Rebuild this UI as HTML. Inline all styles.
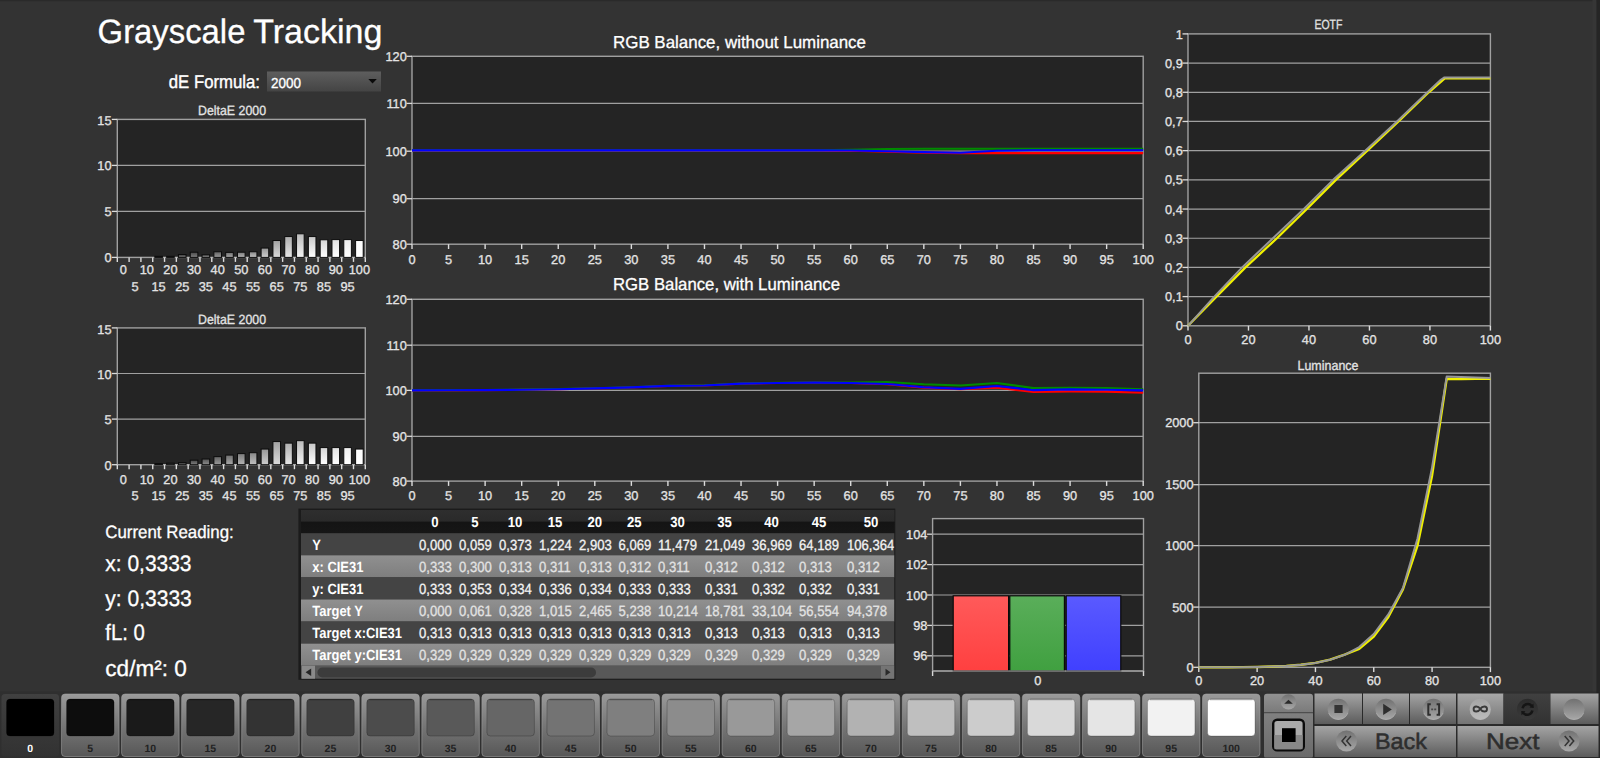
<!DOCTYPE html>
<html><head><meta charset="utf-8"><title>Grayscale Tracking</title>
<style>
html,body{margin:0;padding:0;background:#333333;overflow:hidden}
body{width:1600px;height:758px;font-family:"Liberation Sans",sans-serif}
svg{display:block;font-family:"Liberation Sans",sans-serif}
</style></head><body>
<svg width="1600" height="758" viewBox="0 0 1600 758" text-rendering="geometricPrecision">
<rect x="0.00" y="0.00" width="1600.00" height="758.00" fill="#333333" />
<rect x="0.00" y="0.00" width="1600.00" height="1.20" fill="#2a2a2a" />
<rect x="1592.50" y="0.00" width="4.00" height="758.00" fill="#363636" />
<rect x="1596.50" y="0.00" width="3.50" height="758.00" fill="#252525" />
<text x="97.60" y="42.90" font-size="33.8" text-anchor="start" fill="#ffffff" font-weight="normal" textLength="147.8" lengthAdjust="spacingAndGlyphs"  stroke="#ffffff" stroke-width="0.3">Grayscale</text>
<text x="253.20" y="42.90" font-size="33.8" text-anchor="start" fill="#ffffff" font-weight="normal" textLength="129.2" lengthAdjust="spacingAndGlyphs"  stroke="#ffffff" stroke-width="0.3">Tracking</text>
<text x="168.80" y="87.60" font-size="18.4" text-anchor="start" fill="#ffffff" font-weight="normal" textLength="91.2" lengthAdjust="spacingAndGlyphs" stroke="#ffffff" stroke-width="0.4">dE Formula:</text>
<defs><linearGradient id="dd" x1="0" y1="0" x2="0" y2="1"><stop offset="0" stop-color="#5e5e5e"/><stop offset="1" stop-color="#444444"/></linearGradient><linearGradient id="btn" x1="0" y1="0" x2="0" y2="1"><stop offset="0" stop-color="#9a9a9a"/><stop offset="0.5" stop-color="#777777"/><stop offset="1" stop-color="#575757"/></linearGradient><linearGradient id="btn2" x1="0" y1="0" x2="0" y2="1"><stop offset="0" stop-color="#a4a4a4"/><stop offset="1" stop-color="#5c5c5c"/></linearGradient><linearGradient id="btnd" x1="0" y1="0" x2="0" y2="1"><stop offset="0" stop-color="#404040"/><stop offset="1" stop-color="#323232"/></linearGradient><linearGradient id="circ" x1="0" y1="0" x2="0" y2="1"><stop offset="0" stop-color="#717171"/><stop offset="1" stop-color="#a8a8a8"/></linearGradient><linearGradient id="circl" x1="0" y1="0" x2="0" y2="1"><stop offset="0" stop-color="#a4a4a4"/><stop offset="1" stop-color="#bcbcbc"/></linearGradient><linearGradient id="btnl" x1="0" y1="0" x2="0" y2="1"><stop offset="0" stop-color="#a8a8a8"/><stop offset="1" stop-color="#747474"/></linearGradient><linearGradient id="circd" x1="0" y1="0" x2="0" y2="1"><stop offset="0" stop-color="#2a2a2a"/><stop offset="1" stop-color="#3a3a3a"/></linearGradient><linearGradient id="hdr" x1="0" y1="0" x2="0" y2="1"><stop offset="0" stop-color="#2e2e2e"/><stop offset="0.48" stop-color="#2a2a2a"/><stop offset="0.52" stop-color="#141414"/><stop offset="1" stop-color="#161616"/></linearGradient><linearGradient id="rowl" x1="0" y1="0" x2="0" y2="1"><stop offset="0" stop-color="#909090"/><stop offset="1" stop-color="#7e7e7e"/></linearGradient><linearGradient id="gr" x1="0" y1="0" x2="0" y2="1"><stop offset="0" stop-color="#ff5a5a"/><stop offset="1" stop-color="#ff4040"/></linearGradient><linearGradient id="gg" x1="0" y1="0" x2="0" y2="1"><stop offset="0" stop-color="#5aae5a"/><stop offset="1" stop-color="#40a040"/></linearGradient><linearGradient id="gb" x1="0" y1="0" x2="0" y2="1"><stop offset="0" stop-color="#5a5aff"/><stop offset="1" stop-color="#4040ff"/></linearGradient><linearGradient id="pc1" x1="0" y1="0" x2="0" y2="1"><stop offset="0" stop-color="#929292"/><stop offset="1" stop-color="#767676"/></linearGradient><linearGradient id="pc2" x1="0" y1="0" x2="0" y2="1"><stop offset="0" stop-color="#808080"/><stop offset="1" stop-color="#6a6a6a"/></linearGradient></defs>
<rect x="267.00" y="71.50" width="114.00" height="20.00" fill="url(#dd)" />
<text x="271.00" y="88.20" font-size="14.5" text-anchor="start" fill="#ffffff" font-weight="normal" textLength="30.0" lengthAdjust="spacingAndGlyphs"  stroke="#ffffff" stroke-width="0.3">2000</text>
<path d="M368.3 79 L376.8 79 L372.55 83.6 Z" fill="#0a0a0a"/>
<rect x="117.30" y="119.40" width="248.00" height="138.00" fill="#242424" />
<line x1="117.30" y1="211.40" x2="365.30" y2="211.40" stroke="#a0a0a0" stroke-width="1.2" />
<line x1="117.30" y1="165.40" x2="365.30" y2="165.40" stroke="#a0a0a0" stroke-width="1.2" />
<rect x="117.30" y="119.40" width="248.00" height="138.00" fill="none" stroke="#a0a0a0" stroke-width="1.4"/>
<line x1="111.80" y1="257.40" x2="117.30" y2="257.40" stroke="#dcdcdc" stroke-width="1.3" />
<text x="111.50" y="262.40" font-size="12.8" text-anchor="end" fill="#e4e4e4" font-weight="normal"  stroke="#e4e4e4" stroke-width="0.3">0</text>
<line x1="111.80" y1="211.40" x2="117.30" y2="211.40" stroke="#dcdcdc" stroke-width="1.3" />
<text x="111.50" y="216.40" font-size="12.8" text-anchor="end" fill="#e4e4e4" font-weight="normal"  stroke="#e4e4e4" stroke-width="0.3">5</text>
<line x1="111.80" y1="165.40" x2="117.30" y2="165.40" stroke="#dcdcdc" stroke-width="1.3" />
<text x="111.50" y="170.40" font-size="12.8" text-anchor="end" fill="#e4e4e4" font-weight="normal"  stroke="#e4e4e4" stroke-width="0.3">10</text>
<line x1="111.80" y1="119.40" x2="117.30" y2="119.40" stroke="#dcdcdc" stroke-width="1.3" />
<text x="111.50" y="125.30" font-size="12.8" text-anchor="end" fill="#e4e4e4" font-weight="normal"  stroke="#e4e4e4" stroke-width="0.3">15</text>
<line x1="117.30" y1="257.40" x2="117.30" y2="261.90" stroke="#dcdcdc" stroke-width="1.4" />
<line x1="129.11" y1="257.40" x2="129.11" y2="261.90" stroke="#dcdcdc" stroke-width="1.4" />
<line x1="140.92" y1="257.40" x2="140.92" y2="261.90" stroke="#dcdcdc" stroke-width="1.4" />
<line x1="152.73" y1="257.40" x2="152.73" y2="261.90" stroke="#dcdcdc" stroke-width="1.4" />
<line x1="164.54" y1="257.40" x2="164.54" y2="261.90" stroke="#dcdcdc" stroke-width="1.4" />
<line x1="176.35" y1="257.40" x2="176.35" y2="261.90" stroke="#dcdcdc" stroke-width="1.4" />
<line x1="188.16" y1="257.40" x2="188.16" y2="261.90" stroke="#dcdcdc" stroke-width="1.4" />
<line x1="199.97" y1="257.40" x2="199.97" y2="261.90" stroke="#dcdcdc" stroke-width="1.4" />
<line x1="211.78" y1="257.40" x2="211.78" y2="261.90" stroke="#dcdcdc" stroke-width="1.4" />
<line x1="223.59" y1="257.40" x2="223.59" y2="261.90" stroke="#dcdcdc" stroke-width="1.4" />
<line x1="235.40" y1="257.40" x2="235.40" y2="261.90" stroke="#dcdcdc" stroke-width="1.4" />
<line x1="247.20" y1="257.40" x2="247.20" y2="261.90" stroke="#dcdcdc" stroke-width="1.4" />
<line x1="259.01" y1="257.40" x2="259.01" y2="261.90" stroke="#dcdcdc" stroke-width="1.4" />
<line x1="270.82" y1="257.40" x2="270.82" y2="261.90" stroke="#dcdcdc" stroke-width="1.4" />
<line x1="282.63" y1="257.40" x2="282.63" y2="261.90" stroke="#dcdcdc" stroke-width="1.4" />
<line x1="294.44" y1="257.40" x2="294.44" y2="261.90" stroke="#dcdcdc" stroke-width="1.4" />
<line x1="306.25" y1="257.40" x2="306.25" y2="261.90" stroke="#dcdcdc" stroke-width="1.4" />
<line x1="318.06" y1="257.40" x2="318.06" y2="261.90" stroke="#dcdcdc" stroke-width="1.4" />
<line x1="329.87" y1="257.40" x2="329.87" y2="261.90" stroke="#dcdcdc" stroke-width="1.4" />
<line x1="341.68" y1="257.40" x2="341.68" y2="261.90" stroke="#dcdcdc" stroke-width="1.4" />
<line x1="353.49" y1="257.40" x2="353.49" y2="261.90" stroke="#dcdcdc" stroke-width="1.4" />
<line x1="365.30" y1="257.40" x2="365.30" y2="261.90" stroke="#dcdcdc" stroke-width="1.4" />
<text x="123.20" y="274.20" font-size="12.8" text-anchor="middle" fill="#e4e4e4" font-weight="normal"  stroke="#e4e4e4" stroke-width="0.3">0</text>
<text x="135.01" y="291.30" font-size="12.8" text-anchor="middle" fill="#e4e4e4" font-weight="normal"  stroke="#e4e4e4" stroke-width="0.3">5</text>
<text x="146.82" y="274.20" font-size="12.8" text-anchor="middle" fill="#e4e4e4" font-weight="normal"  stroke="#e4e4e4" stroke-width="0.3">10</text>
<text x="158.63" y="291.30" font-size="12.8" text-anchor="middle" fill="#e4e4e4" font-weight="normal"  stroke="#e4e4e4" stroke-width="0.3">15</text>
<defs><linearGradient id="bg117_119_3" x1="0" y1="0" x2="0" y2="1"><stop offset="0" stop-color="rgb(34,34,34)"/><stop offset="1" stop-color="rgb(90,90,90)"/></linearGradient></defs>
<rect x="154.83" y="256.34" width="7.60" height="1.06" fill="url(#bg117_119_3)" stroke="#0c0c0c" stroke-width="1"/>
<text x="170.44" y="274.20" font-size="12.8" text-anchor="middle" fill="#e4e4e4" font-weight="normal"  stroke="#e4e4e4" stroke-width="0.3">20</text>
<defs><linearGradient id="bg117_119_4" x1="0" y1="0" x2="0" y2="1"><stop offset="0" stop-color="rgb(47,47,47)"/><stop offset="1" stop-color="rgb(103,103,103)"/></linearGradient></defs>
<rect x="166.64" y="256.34" width="7.60" height="1.06" fill="url(#bg117_119_4)" stroke="#0c0c0c" stroke-width="1"/>
<text x="182.25" y="291.30" font-size="12.8" text-anchor="middle" fill="#e4e4e4" font-weight="normal"  stroke="#e4e4e4" stroke-width="0.3">25</text>
<defs><linearGradient id="bg117_119_5" x1="0" y1="0" x2="0" y2="1"><stop offset="0" stop-color="rgb(60,60,60)"/><stop offset="1" stop-color="rgb(116,116,116)"/></linearGradient></defs>
<rect x="178.45" y="254.50" width="7.60" height="2.90" fill="url(#bg117_119_5)" stroke="#0c0c0c" stroke-width="1"/>
<text x="194.06" y="274.20" font-size="12.8" text-anchor="middle" fill="#e4e4e4" font-weight="normal"  stroke="#e4e4e4" stroke-width="0.3">30</text>
<defs><linearGradient id="bg117_119_6" x1="0" y1="0" x2="0" y2="1"><stop offset="0" stop-color="rgb(72,72,72)"/><stop offset="1" stop-color="rgb(128,128,128)"/></linearGradient></defs>
<rect x="190.26" y="252.20" width="7.60" height="5.20" fill="url(#bg117_119_6)" stroke="#0c0c0c" stroke-width="1"/>
<text x="205.87" y="291.30" font-size="12.8" text-anchor="middle" fill="#e4e4e4" font-weight="normal"  stroke="#e4e4e4" stroke-width="0.3">35</text>
<defs><linearGradient id="bg117_119_7" x1="0" y1="0" x2="0" y2="1"><stop offset="0" stop-color="rgb(85,85,85)"/><stop offset="1" stop-color="rgb(141,141,141)"/></linearGradient></defs>
<rect x="202.07" y="254.78" width="7.60" height="2.62" fill="url(#bg117_119_7)" stroke="#0c0c0c" stroke-width="1"/>
<text x="217.68" y="274.20" font-size="12.8" text-anchor="middle" fill="#e4e4e4" font-weight="normal"  stroke="#e4e4e4" stroke-width="0.3">40</text>
<defs><linearGradient id="bg117_119_8" x1="0" y1="0" x2="0" y2="1"><stop offset="0" stop-color="rgb(98,98,98)"/><stop offset="1" stop-color="rgb(154,154,154)"/></linearGradient></defs>
<rect x="213.88" y="251.74" width="7.60" height="5.66" fill="url(#bg117_119_8)" stroke="#0c0c0c" stroke-width="1"/>
<text x="229.49" y="291.30" font-size="12.8" text-anchor="middle" fill="#e4e4e4" font-weight="normal"  stroke="#e4e4e4" stroke-width="0.3">45</text>
<defs><linearGradient id="bg117_119_9" x1="0" y1="0" x2="0" y2="1"><stop offset="0" stop-color="rgb(111,111,111)"/><stop offset="1" stop-color="rgb(167,167,167)"/></linearGradient></defs>
<rect x="225.69" y="252.38" width="7.60" height="5.02" fill="url(#bg117_119_9)" stroke="#0c0c0c" stroke-width="1"/>
<text x="241.30" y="274.20" font-size="12.8" text-anchor="middle" fill="#e4e4e4" font-weight="normal"  stroke="#e4e4e4" stroke-width="0.3">50</text>
<defs><linearGradient id="bg117_119_10" x1="0" y1="0" x2="0" y2="1"><stop offset="0" stop-color="rgb(123,123,123)"/><stop offset="1" stop-color="rgb(179,179,179)"/></linearGradient></defs>
<rect x="237.50" y="252.20" width="7.60" height="5.20" fill="url(#bg117_119_10)" stroke="#0c0c0c" stroke-width="1"/>
<text x="253.11" y="291.30" font-size="12.8" text-anchor="middle" fill="#e4e4e4" font-weight="normal"  stroke="#e4e4e4" stroke-width="0.3">55</text>
<defs><linearGradient id="bg117_119_11" x1="0" y1="0" x2="0" y2="1"><stop offset="0" stop-color="rgb(136,136,136)"/><stop offset="1" stop-color="rgb(192,192,192)"/></linearGradient></defs>
<rect x="249.31" y="251.74" width="7.60" height="5.66" fill="url(#bg117_119_11)" stroke="#0c0c0c" stroke-width="1"/>
<text x="264.92" y="274.20" font-size="12.8" text-anchor="middle" fill="#e4e4e4" font-weight="normal"  stroke="#e4e4e4" stroke-width="0.3">60</text>
<defs><linearGradient id="bg117_119_12" x1="0" y1="0" x2="0" y2="1"><stop offset="0" stop-color="rgb(149,149,149)"/><stop offset="1" stop-color="rgb(205,205,205)"/></linearGradient></defs>
<rect x="261.12" y="248.06" width="7.60" height="9.34" fill="url(#bg117_119_12)" stroke="#0c0c0c" stroke-width="1"/>
<text x="276.73" y="291.30" font-size="12.8" text-anchor="middle" fill="#e4e4e4" font-weight="normal"  stroke="#e4e4e4" stroke-width="0.3">65</text>
<defs><linearGradient id="bg117_119_13" x1="0" y1="0" x2="0" y2="1"><stop offset="0" stop-color="rgb(162,162,162)"/><stop offset="1" stop-color="rgb(218,218,218)"/></linearGradient></defs>
<rect x="272.93" y="240.52" width="7.60" height="16.88" fill="url(#bg117_119_13)" stroke="#0c0c0c" stroke-width="1"/>
<text x="288.54" y="274.20" font-size="12.8" text-anchor="middle" fill="#e4e4e4" font-weight="normal"  stroke="#e4e4e4" stroke-width="0.3">70</text>
<defs><linearGradient id="bg117_119_14" x1="0" y1="0" x2="0" y2="1"><stop offset="0" stop-color="rgb(174,174,174)"/><stop offset="1" stop-color="rgb(230,230,230)"/></linearGradient></defs>
<rect x="284.74" y="236.56" width="7.60" height="20.84" fill="url(#bg117_119_14)" stroke="#0c0c0c" stroke-width="1"/>
<text x="300.35" y="291.30" font-size="12.8" text-anchor="middle" fill="#e4e4e4" font-weight="normal"  stroke="#e4e4e4" stroke-width="0.3">75</text>
<defs><linearGradient id="bg117_119_15" x1="0" y1="0" x2="0" y2="1"><stop offset="0" stop-color="rgb(187,187,187)"/><stop offset="1" stop-color="rgb(243,243,243)"/></linearGradient></defs>
<rect x="296.55" y="233.80" width="7.60" height="23.60" fill="url(#bg117_119_15)" stroke="#0c0c0c" stroke-width="1"/>
<text x="312.16" y="274.20" font-size="12.8" text-anchor="middle" fill="#e4e4e4" font-weight="normal"  stroke="#e4e4e4" stroke-width="0.3">80</text>
<defs><linearGradient id="bg117_119_16" x1="0" y1="0" x2="0" y2="1"><stop offset="0" stop-color="rgb(200,200,200)"/><stop offset="1" stop-color="rgb(255,255,255)"/></linearGradient></defs>
<rect x="308.36" y="236.56" width="7.60" height="20.84" fill="url(#bg117_119_16)" stroke="#0c0c0c" stroke-width="1"/>
<text x="323.97" y="291.30" font-size="12.8" text-anchor="middle" fill="#e4e4e4" font-weight="normal"  stroke="#e4e4e4" stroke-width="0.3">85</text>
<defs><linearGradient id="bg117_119_17" x1="0" y1="0" x2="0" y2="1"><stop offset="0" stop-color="rgb(213,213,213)"/><stop offset="1" stop-color="rgb(255,255,255)"/></linearGradient></defs>
<rect x="320.17" y="239.78" width="7.60" height="17.62" fill="url(#bg117_119_17)" stroke="#0c0c0c" stroke-width="1"/>
<text x="335.78" y="274.20" font-size="12.8" text-anchor="middle" fill="#e4e4e4" font-weight="normal"  stroke="#e4e4e4" stroke-width="0.3">90</text>
<defs><linearGradient id="bg117_119_18" x1="0" y1="0" x2="0" y2="1"><stop offset="0" stop-color="rgb(225,225,225)"/><stop offset="1" stop-color="rgb(255,255,255)"/></linearGradient></defs>
<rect x="331.98" y="239.60" width="7.60" height="17.80" fill="url(#bg117_119_18)" stroke="#0c0c0c" stroke-width="1"/>
<text x="347.59" y="291.30" font-size="12.8" text-anchor="middle" fill="#e4e4e4" font-weight="normal"  stroke="#e4e4e4" stroke-width="0.3">95</text>
<defs><linearGradient id="bg117_119_19" x1="0" y1="0" x2="0" y2="1"><stop offset="0" stop-color="rgb(238,238,238)"/><stop offset="1" stop-color="rgb(255,255,255)"/></linearGradient></defs>
<rect x="343.79" y="239.60" width="7.60" height="17.80" fill="url(#bg117_119_19)" stroke="#0c0c0c" stroke-width="1"/>
<text x="359.40" y="274.20" font-size="12.8" text-anchor="middle" fill="#e4e4e4" font-weight="normal"  stroke="#e4e4e4" stroke-width="0.3">100</text>
<defs><linearGradient id="bg117_119_20" x1="0" y1="0" x2="0" y2="1"><stop offset="0" stop-color="rgb(251,251,251)"/><stop offset="1" stop-color="rgb(255,255,255)"/></linearGradient></defs>
<rect x="355.60" y="240.52" width="7.60" height="16.88" fill="url(#bg117_119_20)" stroke="#0c0c0c" stroke-width="1"/>
<text x="232.00" y="114.80" font-size="13.3" text-anchor="middle" fill="#e4e4e4" font-weight="normal" textLength="68.0" lengthAdjust="spacingAndGlyphs"  stroke="#e4e4e4" stroke-width="0.3">DeltaE 2000</text>
<rect x="117.30" y="327.90" width="248.00" height="136.80" fill="#242424" />
<line x1="117.30" y1="419.10" x2="365.30" y2="419.10" stroke="#a0a0a0" stroke-width="1.2" />
<line x1="117.30" y1="373.50" x2="365.30" y2="373.50" stroke="#a0a0a0" stroke-width="1.2" />
<rect x="117.30" y="327.90" width="248.00" height="136.80" fill="none" stroke="#a0a0a0" stroke-width="1.4"/>
<line x1="111.80" y1="464.70" x2="117.30" y2="464.70" stroke="#dcdcdc" stroke-width="1.3" />
<text x="111.50" y="469.70" font-size="12.8" text-anchor="end" fill="#e4e4e4" font-weight="normal"  stroke="#e4e4e4" stroke-width="0.3">0</text>
<line x1="111.80" y1="419.10" x2="117.30" y2="419.10" stroke="#dcdcdc" stroke-width="1.3" />
<text x="111.50" y="424.10" font-size="12.8" text-anchor="end" fill="#e4e4e4" font-weight="normal"  stroke="#e4e4e4" stroke-width="0.3">5</text>
<line x1="111.80" y1="373.50" x2="117.30" y2="373.50" stroke="#dcdcdc" stroke-width="1.3" />
<text x="111.50" y="378.50" font-size="12.8" text-anchor="end" fill="#e4e4e4" font-weight="normal"  stroke="#e4e4e4" stroke-width="0.3">10</text>
<line x1="111.80" y1="327.90" x2="117.30" y2="327.90" stroke="#dcdcdc" stroke-width="1.3" />
<text x="111.50" y="333.80" font-size="12.8" text-anchor="end" fill="#e4e4e4" font-weight="normal"  stroke="#e4e4e4" stroke-width="0.3">15</text>
<line x1="117.30" y1="464.70" x2="117.30" y2="469.20" stroke="#dcdcdc" stroke-width="1.4" />
<line x1="129.11" y1="464.70" x2="129.11" y2="469.20" stroke="#dcdcdc" stroke-width="1.4" />
<line x1="140.92" y1="464.70" x2="140.92" y2="469.20" stroke="#dcdcdc" stroke-width="1.4" />
<line x1="152.73" y1="464.70" x2="152.73" y2="469.20" stroke="#dcdcdc" stroke-width="1.4" />
<line x1="164.54" y1="464.70" x2="164.54" y2="469.20" stroke="#dcdcdc" stroke-width="1.4" />
<line x1="176.35" y1="464.70" x2="176.35" y2="469.20" stroke="#dcdcdc" stroke-width="1.4" />
<line x1="188.16" y1="464.70" x2="188.16" y2="469.20" stroke="#dcdcdc" stroke-width="1.4" />
<line x1="199.97" y1="464.70" x2="199.97" y2="469.20" stroke="#dcdcdc" stroke-width="1.4" />
<line x1="211.78" y1="464.70" x2="211.78" y2="469.20" stroke="#dcdcdc" stroke-width="1.4" />
<line x1="223.59" y1="464.70" x2="223.59" y2="469.20" stroke="#dcdcdc" stroke-width="1.4" />
<line x1="235.40" y1="464.70" x2="235.40" y2="469.20" stroke="#dcdcdc" stroke-width="1.4" />
<line x1="247.20" y1="464.70" x2="247.20" y2="469.20" stroke="#dcdcdc" stroke-width="1.4" />
<line x1="259.01" y1="464.70" x2="259.01" y2="469.20" stroke="#dcdcdc" stroke-width="1.4" />
<line x1="270.82" y1="464.70" x2="270.82" y2="469.20" stroke="#dcdcdc" stroke-width="1.4" />
<line x1="282.63" y1="464.70" x2="282.63" y2="469.20" stroke="#dcdcdc" stroke-width="1.4" />
<line x1="294.44" y1="464.70" x2="294.44" y2="469.20" stroke="#dcdcdc" stroke-width="1.4" />
<line x1="306.25" y1="464.70" x2="306.25" y2="469.20" stroke="#dcdcdc" stroke-width="1.4" />
<line x1="318.06" y1="464.70" x2="318.06" y2="469.20" stroke="#dcdcdc" stroke-width="1.4" />
<line x1="329.87" y1="464.70" x2="329.87" y2="469.20" stroke="#dcdcdc" stroke-width="1.4" />
<line x1="341.68" y1="464.70" x2="341.68" y2="469.20" stroke="#dcdcdc" stroke-width="1.4" />
<line x1="353.49" y1="464.70" x2="353.49" y2="469.20" stroke="#dcdcdc" stroke-width="1.4" />
<line x1="365.30" y1="464.70" x2="365.30" y2="469.20" stroke="#dcdcdc" stroke-width="1.4" />
<text x="123.20" y="483.70" font-size="12.8" text-anchor="middle" fill="#e4e4e4" font-weight="normal"  stroke="#e4e4e4" stroke-width="0.3">0</text>
<text x="135.01" y="500.40" font-size="12.8" text-anchor="middle" fill="#e4e4e4" font-weight="normal"  stroke="#e4e4e4" stroke-width="0.3">5</text>
<text x="146.82" y="483.70" font-size="12.8" text-anchor="middle" fill="#e4e4e4" font-weight="normal"  stroke="#e4e4e4" stroke-width="0.3">10</text>
<text x="158.63" y="500.40" font-size="12.8" text-anchor="middle" fill="#e4e4e4" font-weight="normal"  stroke="#e4e4e4" stroke-width="0.3">15</text>
<defs><linearGradient id="bg117_327_3" x1="0" y1="0" x2="0" y2="1"><stop offset="0" stop-color="rgb(34,34,34)"/><stop offset="1" stop-color="rgb(90,90,90)"/></linearGradient></defs>
<rect x="154.83" y="463.64" width="7.60" height="1.06" fill="url(#bg117_327_3)" stroke="#0c0c0c" stroke-width="1"/>
<text x="170.44" y="483.70" font-size="12.8" text-anchor="middle" fill="#e4e4e4" font-weight="normal"  stroke="#e4e4e4" stroke-width="0.3">20</text>
<defs><linearGradient id="bg117_327_4" x1="0" y1="0" x2="0" y2="1"><stop offset="0" stop-color="rgb(47,47,47)"/><stop offset="1" stop-color="rgb(103,103,103)"/></linearGradient></defs>
<rect x="166.64" y="463.19" width="7.60" height="1.51" fill="url(#bg117_327_4)" stroke="#0c0c0c" stroke-width="1"/>
<text x="182.25" y="500.40" font-size="12.8" text-anchor="middle" fill="#e4e4e4" font-weight="normal"  stroke="#e4e4e4" stroke-width="0.3">25</text>
<defs><linearGradient id="bg117_327_5" x1="0" y1="0" x2="0" y2="1"><stop offset="0" stop-color="rgb(60,60,60)"/><stop offset="1" stop-color="rgb(116,116,116)"/></linearGradient></defs>
<rect x="178.45" y="462.64" width="7.60" height="2.06" fill="url(#bg117_327_5)" stroke="#0c0c0c" stroke-width="1"/>
<text x="194.06" y="483.70" font-size="12.8" text-anchor="middle" fill="#e4e4e4" font-weight="normal"  stroke="#e4e4e4" stroke-width="0.3">30</text>
<defs><linearGradient id="bg117_327_6" x1="0" y1="0" x2="0" y2="1"><stop offset="0" stop-color="rgb(72,72,72)"/><stop offset="1" stop-color="rgb(128,128,128)"/></linearGradient></defs>
<rect x="190.26" y="460.18" width="7.60" height="4.52" fill="url(#bg117_327_6)" stroke="#0c0c0c" stroke-width="1"/>
<text x="205.87" y="500.40" font-size="12.8" text-anchor="middle" fill="#e4e4e4" font-weight="normal"  stroke="#e4e4e4" stroke-width="0.3">35</text>
<defs><linearGradient id="bg117_327_7" x1="0" y1="0" x2="0" y2="1"><stop offset="0" stop-color="rgb(85,85,85)"/><stop offset="1" stop-color="rgb(141,141,141)"/></linearGradient></defs>
<rect x="202.07" y="458.99" width="7.60" height="5.71" fill="url(#bg117_327_7)" stroke="#0c0c0c" stroke-width="1"/>
<text x="217.68" y="483.70" font-size="12.8" text-anchor="middle" fill="#e4e4e4" font-weight="normal"  stroke="#e4e4e4" stroke-width="0.3">40</text>
<defs><linearGradient id="bg117_327_8" x1="0" y1="0" x2="0" y2="1"><stop offset="0" stop-color="rgb(98,98,98)"/><stop offset="1" stop-color="rgb(154,154,154)"/></linearGradient></defs>
<rect x="213.88" y="456.62" width="7.60" height="8.08" fill="url(#bg117_327_8)" stroke="#0c0c0c" stroke-width="1"/>
<text x="229.49" y="500.40" font-size="12.8" text-anchor="middle" fill="#e4e4e4" font-weight="normal"  stroke="#e4e4e4" stroke-width="0.3">45</text>
<defs><linearGradient id="bg117_327_9" x1="0" y1="0" x2="0" y2="1"><stop offset="0" stop-color="rgb(111,111,111)"/><stop offset="1" stop-color="rgb(167,167,167)"/></linearGradient></defs>
<rect x="225.69" y="455.07" width="7.60" height="9.63" fill="url(#bg117_327_9)" stroke="#0c0c0c" stroke-width="1"/>
<text x="241.30" y="483.70" font-size="12.8" text-anchor="middle" fill="#e4e4e4" font-weight="normal"  stroke="#e4e4e4" stroke-width="0.3">50</text>
<defs><linearGradient id="bg117_327_10" x1="0" y1="0" x2="0" y2="1"><stop offset="0" stop-color="rgb(123,123,123)"/><stop offset="1" stop-color="rgb(179,179,179)"/></linearGradient></defs>
<rect x="237.50" y="453.61" width="7.60" height="11.09" fill="url(#bg117_327_10)" stroke="#0c0c0c" stroke-width="1"/>
<text x="253.11" y="500.40" font-size="12.8" text-anchor="middle" fill="#e4e4e4" font-weight="normal"  stroke="#e4e4e4" stroke-width="0.3">55</text>
<defs><linearGradient id="bg117_327_11" x1="0" y1="0" x2="0" y2="1"><stop offset="0" stop-color="rgb(136,136,136)"/><stop offset="1" stop-color="rgb(192,192,192)"/></linearGradient></defs>
<rect x="249.31" y="452.70" width="7.60" height="12.00" fill="url(#bg117_327_11)" stroke="#0c0c0c" stroke-width="1"/>
<text x="264.92" y="483.70" font-size="12.8" text-anchor="middle" fill="#e4e4e4" font-weight="normal"  stroke="#e4e4e4" stroke-width="0.3">60</text>
<defs><linearGradient id="bg117_327_12" x1="0" y1="0" x2="0" y2="1"><stop offset="0" stop-color="rgb(149,149,149)"/><stop offset="1" stop-color="rgb(205,205,205)"/></linearGradient></defs>
<rect x="261.12" y="449.05" width="7.60" height="15.65" fill="url(#bg117_327_12)" stroke="#0c0c0c" stroke-width="1"/>
<text x="276.73" y="500.40" font-size="12.8" text-anchor="middle" fill="#e4e4e4" font-weight="normal"  stroke="#e4e4e4" stroke-width="0.3">65</text>
<defs><linearGradient id="bg117_327_13" x1="0" y1="0" x2="0" y2="1"><stop offset="0" stop-color="rgb(162,162,162)"/><stop offset="1" stop-color="rgb(218,218,218)"/></linearGradient></defs>
<rect x="272.93" y="441.57" width="7.60" height="23.13" fill="url(#bg117_327_13)" stroke="#0c0c0c" stroke-width="1"/>
<text x="288.54" y="483.70" font-size="12.8" text-anchor="middle" fill="#e4e4e4" font-weight="normal"  stroke="#e4e4e4" stroke-width="0.3">70</text>
<defs><linearGradient id="bg117_327_14" x1="0" y1="0" x2="0" y2="1"><stop offset="0" stop-color="rgb(174,174,174)"/><stop offset="1" stop-color="rgb(230,230,230)"/></linearGradient></defs>
<rect x="284.74" y="443.12" width="7.60" height="21.58" fill="url(#bg117_327_14)" stroke="#0c0c0c" stroke-width="1"/>
<text x="300.35" y="500.40" font-size="12.8" text-anchor="middle" fill="#e4e4e4" font-weight="normal"  stroke="#e4e4e4" stroke-width="0.3">75</text>
<defs><linearGradient id="bg117_327_15" x1="0" y1="0" x2="0" y2="1"><stop offset="0" stop-color="rgb(187,187,187)"/><stop offset="1" stop-color="rgb(243,243,243)"/></linearGradient></defs>
<rect x="296.55" y="440.66" width="7.60" height="24.04" fill="url(#bg117_327_15)" stroke="#0c0c0c" stroke-width="1"/>
<text x="312.16" y="483.70" font-size="12.8" text-anchor="middle" fill="#e4e4e4" font-weight="normal"  stroke="#e4e4e4" stroke-width="0.3">80</text>
<defs><linearGradient id="bg117_327_16" x1="0" y1="0" x2="0" y2="1"><stop offset="0" stop-color="rgb(200,200,200)"/><stop offset="1" stop-color="rgb(255,255,255)"/></linearGradient></defs>
<rect x="308.36" y="443.12" width="7.60" height="21.58" fill="url(#bg117_327_16)" stroke="#0c0c0c" stroke-width="1"/>
<text x="323.97" y="500.40" font-size="12.8" text-anchor="middle" fill="#e4e4e4" font-weight="normal"  stroke="#e4e4e4" stroke-width="0.3">85</text>
<defs><linearGradient id="bg117_327_17" x1="0" y1="0" x2="0" y2="1"><stop offset="0" stop-color="rgb(213,213,213)"/><stop offset="1" stop-color="rgb(255,255,255)"/></linearGradient></defs>
<rect x="320.17" y="447.59" width="7.60" height="17.11" fill="url(#bg117_327_17)" stroke="#0c0c0c" stroke-width="1"/>
<text x="335.78" y="483.70" font-size="12.8" text-anchor="middle" fill="#e4e4e4" font-weight="normal"  stroke="#e4e4e4" stroke-width="0.3">90</text>
<defs><linearGradient id="bg117_327_18" x1="0" y1="0" x2="0" y2="1"><stop offset="0" stop-color="rgb(225,225,225)"/><stop offset="1" stop-color="rgb(255,255,255)"/></linearGradient></defs>
<rect x="331.98" y="447.59" width="7.60" height="17.11" fill="url(#bg117_327_18)" stroke="#0c0c0c" stroke-width="1"/>
<text x="347.59" y="500.40" font-size="12.8" text-anchor="middle" fill="#e4e4e4" font-weight="normal"  stroke="#e4e4e4" stroke-width="0.3">95</text>
<defs><linearGradient id="bg117_327_19" x1="0" y1="0" x2="0" y2="1"><stop offset="0" stop-color="rgb(238,238,238)"/><stop offset="1" stop-color="rgb(255,255,255)"/></linearGradient></defs>
<rect x="343.79" y="447.59" width="7.60" height="17.11" fill="url(#bg117_327_19)" stroke="#0c0c0c" stroke-width="1"/>
<text x="359.40" y="483.70" font-size="12.8" text-anchor="middle" fill="#e4e4e4" font-weight="normal"  stroke="#e4e4e4" stroke-width="0.3">100</text>
<defs><linearGradient id="bg117_327_20" x1="0" y1="0" x2="0" y2="1"><stop offset="0" stop-color="rgb(251,251,251)"/><stop offset="1" stop-color="rgb(255,255,255)"/></linearGradient></defs>
<rect x="355.60" y="449.05" width="7.60" height="15.65" fill="url(#bg117_327_20)" stroke="#0c0c0c" stroke-width="1"/>
<text x="232.00" y="323.60" font-size="13.3" text-anchor="middle" fill="#e4e4e4" font-weight="normal" textLength="68.0" lengthAdjust="spacingAndGlyphs"  stroke="#e4e4e4" stroke-width="0.3">DeltaE 2000</text>
<rect x="412.00" y="56.30" width="731.20" height="187.90" fill="#242424" />
<line x1="412.00" y1="198.70" x2="1143.20" y2="198.70" stroke="#a0a0a0" stroke-width="1.3" />
<line x1="412.00" y1="151.20" x2="1143.20" y2="151.20" stroke="#a0a0a0" stroke-width="1.3" />
<line x1="412.00" y1="103.40" x2="1143.20" y2="103.40" stroke="#a0a0a0" stroke-width="1.3" />
<rect x="412.00" y="56.30" width="731.20" height="187.90" fill="none" stroke="#a0a0a0" stroke-width="1.4"/>
<line x1="406.50" y1="244.20" x2="412.00" y2="244.20" stroke="#dcdcdc" stroke-width="1.3" />
<text x="406.80" y="248.80" font-size="12.8" text-anchor="end" fill="#e4e4e4" font-weight="normal"  stroke="#e4e4e4" stroke-width="0.3">80</text>
<line x1="406.50" y1="198.70" x2="412.00" y2="198.70" stroke="#dcdcdc" stroke-width="1.3" />
<text x="406.80" y="203.30" font-size="12.8" text-anchor="end" fill="#e4e4e4" font-weight="normal"  stroke="#e4e4e4" stroke-width="0.3">90</text>
<line x1="406.50" y1="151.20" x2="412.00" y2="151.20" stroke="#dcdcdc" stroke-width="1.3" />
<text x="406.80" y="155.80" font-size="12.8" text-anchor="end" fill="#e4e4e4" font-weight="normal"  stroke="#e4e4e4" stroke-width="0.3">100</text>
<line x1="406.50" y1="103.40" x2="412.00" y2="103.40" stroke="#dcdcdc" stroke-width="1.3" />
<text x="406.80" y="108.00" font-size="12.8" text-anchor="end" fill="#e4e4e4" font-weight="normal"  stroke="#e4e4e4" stroke-width="0.3">110</text>
<line x1="406.50" y1="56.30" x2="412.00" y2="56.30" stroke="#dcdcdc" stroke-width="1.3" />
<text x="406.80" y="60.90" font-size="12.8" text-anchor="end" fill="#e4e4e4" font-weight="normal"  stroke="#e4e4e4" stroke-width="0.3">120</text>
<line x1="412.00" y1="244.20" x2="412.00" y2="249.00" stroke="#dcdcdc" stroke-width="1.4" />
<text x="412.00" y="263.80" font-size="12.8" text-anchor="middle" fill="#e4e4e4" font-weight="normal"  stroke="#e4e4e4" stroke-width="0.3">0</text>
<line x1="448.56" y1="244.20" x2="448.56" y2="249.00" stroke="#dcdcdc" stroke-width="1.4" />
<text x="448.56" y="263.80" font-size="12.8" text-anchor="middle" fill="#e4e4e4" font-weight="normal"  stroke="#e4e4e4" stroke-width="0.3">5</text>
<line x1="485.12" y1="244.20" x2="485.12" y2="249.00" stroke="#dcdcdc" stroke-width="1.4" />
<text x="485.12" y="263.80" font-size="12.8" text-anchor="middle" fill="#e4e4e4" font-weight="normal"  stroke="#e4e4e4" stroke-width="0.3">10</text>
<line x1="521.68" y1="244.20" x2="521.68" y2="249.00" stroke="#dcdcdc" stroke-width="1.4" />
<text x="521.68" y="263.80" font-size="12.8" text-anchor="middle" fill="#e4e4e4" font-weight="normal"  stroke="#e4e4e4" stroke-width="0.3">15</text>
<line x1="558.24" y1="244.20" x2="558.24" y2="249.00" stroke="#dcdcdc" stroke-width="1.4" />
<text x="558.24" y="263.80" font-size="12.8" text-anchor="middle" fill="#e4e4e4" font-weight="normal"  stroke="#e4e4e4" stroke-width="0.3">20</text>
<line x1="594.80" y1="244.20" x2="594.80" y2="249.00" stroke="#dcdcdc" stroke-width="1.4" />
<text x="594.80" y="263.80" font-size="12.8" text-anchor="middle" fill="#e4e4e4" font-weight="normal"  stroke="#e4e4e4" stroke-width="0.3">25</text>
<line x1="631.36" y1="244.20" x2="631.36" y2="249.00" stroke="#dcdcdc" stroke-width="1.4" />
<text x="631.36" y="263.80" font-size="12.8" text-anchor="middle" fill="#e4e4e4" font-weight="normal"  stroke="#e4e4e4" stroke-width="0.3">30</text>
<line x1="667.92" y1="244.20" x2="667.92" y2="249.00" stroke="#dcdcdc" stroke-width="1.4" />
<text x="667.92" y="263.80" font-size="12.8" text-anchor="middle" fill="#e4e4e4" font-weight="normal"  stroke="#e4e4e4" stroke-width="0.3">35</text>
<line x1="704.48" y1="244.20" x2="704.48" y2="249.00" stroke="#dcdcdc" stroke-width="1.4" />
<text x="704.48" y="263.80" font-size="12.8" text-anchor="middle" fill="#e4e4e4" font-weight="normal"  stroke="#e4e4e4" stroke-width="0.3">40</text>
<line x1="741.04" y1="244.20" x2="741.04" y2="249.00" stroke="#dcdcdc" stroke-width="1.4" />
<text x="741.04" y="263.80" font-size="12.8" text-anchor="middle" fill="#e4e4e4" font-weight="normal"  stroke="#e4e4e4" stroke-width="0.3">45</text>
<line x1="777.60" y1="244.20" x2="777.60" y2="249.00" stroke="#dcdcdc" stroke-width="1.4" />
<text x="777.60" y="263.80" font-size="12.8" text-anchor="middle" fill="#e4e4e4" font-weight="normal"  stroke="#e4e4e4" stroke-width="0.3">50</text>
<line x1="814.16" y1="244.20" x2="814.16" y2="249.00" stroke="#dcdcdc" stroke-width="1.4" />
<text x="814.16" y="263.80" font-size="12.8" text-anchor="middle" fill="#e4e4e4" font-weight="normal"  stroke="#e4e4e4" stroke-width="0.3">55</text>
<line x1="850.72" y1="244.20" x2="850.72" y2="249.00" stroke="#dcdcdc" stroke-width="1.4" />
<text x="850.72" y="263.80" font-size="12.8" text-anchor="middle" fill="#e4e4e4" font-weight="normal"  stroke="#e4e4e4" stroke-width="0.3">60</text>
<line x1="887.28" y1="244.20" x2="887.28" y2="249.00" stroke="#dcdcdc" stroke-width="1.4" />
<text x="887.28" y="263.80" font-size="12.8" text-anchor="middle" fill="#e4e4e4" font-weight="normal"  stroke="#e4e4e4" stroke-width="0.3">65</text>
<line x1="923.84" y1="244.20" x2="923.84" y2="249.00" stroke="#dcdcdc" stroke-width="1.4" />
<text x="923.84" y="263.80" font-size="12.8" text-anchor="middle" fill="#e4e4e4" font-weight="normal"  stroke="#e4e4e4" stroke-width="0.3">70</text>
<line x1="960.40" y1="244.20" x2="960.40" y2="249.00" stroke="#dcdcdc" stroke-width="1.4" />
<text x="960.40" y="263.80" font-size="12.8" text-anchor="middle" fill="#e4e4e4" font-weight="normal"  stroke="#e4e4e4" stroke-width="0.3">75</text>
<line x1="996.96" y1="244.20" x2="996.96" y2="249.00" stroke="#dcdcdc" stroke-width="1.4" />
<text x="996.96" y="263.80" font-size="12.8" text-anchor="middle" fill="#e4e4e4" font-weight="normal"  stroke="#e4e4e4" stroke-width="0.3">80</text>
<line x1="1033.52" y1="244.20" x2="1033.52" y2="249.00" stroke="#dcdcdc" stroke-width="1.4" />
<text x="1033.52" y="263.80" font-size="12.8" text-anchor="middle" fill="#e4e4e4" font-weight="normal"  stroke="#e4e4e4" stroke-width="0.3">85</text>
<line x1="1070.08" y1="244.20" x2="1070.08" y2="249.00" stroke="#dcdcdc" stroke-width="1.4" />
<text x="1070.08" y="263.80" font-size="12.8" text-anchor="middle" fill="#e4e4e4" font-weight="normal"  stroke="#e4e4e4" stroke-width="0.3">90</text>
<line x1="1106.64" y1="244.20" x2="1106.64" y2="249.00" stroke="#dcdcdc" stroke-width="1.4" />
<text x="1106.64" y="263.80" font-size="12.8" text-anchor="middle" fill="#e4e4e4" font-weight="normal"  stroke="#e4e4e4" stroke-width="0.3">95</text>
<line x1="1143.20" y1="244.20" x2="1143.20" y2="249.00" stroke="#dcdcdc" stroke-width="1.4" />
<text x="1143.20" y="263.80" font-size="12.8" text-anchor="middle" fill="#e4e4e4" font-weight="normal"  stroke="#e4e4e4" stroke-width="0.3">100</text>
<text x="613.00" y="47.50" font-size="17.3" text-anchor="start" fill="#ffffff" font-weight="normal" textLength="253.0" lengthAdjust="spacingAndGlyphs"  stroke="#ffffff" stroke-width="0.3">RGB Balance, without Luminance</text>
<polyline points="412.00,150.48 448.56,150.48 485.12,150.48 521.68,150.48 558.24,150.48 594.80,150.48 631.36,150.48 667.92,150.48 704.48,150.48 741.04,150.48 777.60,150.48 814.16,150.48 850.72,150.72 887.28,151.67 923.84,152.62 960.40,153.10 996.96,153.10 1033.52,153.10 1070.08,153.10 1106.64,153.10 1143.20,153.10" fill="none" stroke="#ff0000" stroke-width="2.1" stroke-linejoin="round"/>
<polyline points="412.00,150.29 448.56,150.29 485.12,150.29 521.68,150.29 558.24,150.29 594.80,150.29 631.36,150.29 667.92,150.29 704.48,150.29 741.04,150.29 777.60,150.29 814.16,150.29 850.72,149.77 887.28,149.05 923.84,148.81 960.40,148.81 996.96,148.81 1033.52,148.81 1070.08,148.81 1106.64,148.81 1143.20,148.81" fill="none" stroke="#008a00" stroke-width="2.1" stroke-linejoin="round"/>
<polyline points="412.00,150.39 448.56,150.39 485.12,150.39 521.68,150.39 558.24,150.39 594.80,150.39 631.36,150.39 667.92,150.39 704.48,150.39 741.04,150.39 777.60,150.39 814.16,150.39 850.72,150.48 887.28,151.20 923.84,152.15 960.40,152.81 996.96,150.72 1033.52,150.29 1070.08,150.29 1106.64,150.29 1143.20,150.29" fill="none" stroke="#0000ff" stroke-width="2.1" stroke-linejoin="round"/>
<rect x="412.00" y="299.30" width="731.20" height="181.80" fill="#242424" />
<line x1="412.00" y1="436.30" x2="1143.20" y2="436.30" stroke="#a0a0a0" stroke-width="1.3" />
<line x1="412.00" y1="390.40" x2="1143.20" y2="390.40" stroke="#a0a0a0" stroke-width="1.3" />
<line x1="412.00" y1="345.20" x2="1143.20" y2="345.20" stroke="#a0a0a0" stroke-width="1.3" />
<rect x="412.00" y="299.30" width="731.20" height="181.80" fill="none" stroke="#a0a0a0" stroke-width="1.4"/>
<line x1="406.50" y1="481.10" x2="412.00" y2="481.10" stroke="#dcdcdc" stroke-width="1.3" />
<text x="406.80" y="485.70" font-size="12.8" text-anchor="end" fill="#e4e4e4" font-weight="normal"  stroke="#e4e4e4" stroke-width="0.3">80</text>
<line x1="406.50" y1="436.30" x2="412.00" y2="436.30" stroke="#dcdcdc" stroke-width="1.3" />
<text x="406.80" y="440.90" font-size="12.8" text-anchor="end" fill="#e4e4e4" font-weight="normal"  stroke="#e4e4e4" stroke-width="0.3">90</text>
<line x1="406.50" y1="390.40" x2="412.00" y2="390.40" stroke="#dcdcdc" stroke-width="1.3" />
<text x="406.80" y="395.00" font-size="12.8" text-anchor="end" fill="#e4e4e4" font-weight="normal"  stroke="#e4e4e4" stroke-width="0.3">100</text>
<line x1="406.50" y1="345.20" x2="412.00" y2="345.20" stroke="#dcdcdc" stroke-width="1.3" />
<text x="406.80" y="349.80" font-size="12.8" text-anchor="end" fill="#e4e4e4" font-weight="normal"  stroke="#e4e4e4" stroke-width="0.3">110</text>
<line x1="406.50" y1="299.30" x2="412.00" y2="299.30" stroke="#dcdcdc" stroke-width="1.3" />
<text x="406.80" y="303.90" font-size="12.8" text-anchor="end" fill="#e4e4e4" font-weight="normal"  stroke="#e4e4e4" stroke-width="0.3">120</text>
<line x1="412.00" y1="481.10" x2="412.00" y2="485.90" stroke="#dcdcdc" stroke-width="1.4" />
<text x="412.00" y="500.40" font-size="12.8" text-anchor="middle" fill="#e4e4e4" font-weight="normal"  stroke="#e4e4e4" stroke-width="0.3">0</text>
<line x1="448.56" y1="481.10" x2="448.56" y2="485.90" stroke="#dcdcdc" stroke-width="1.4" />
<text x="448.56" y="500.40" font-size="12.8" text-anchor="middle" fill="#e4e4e4" font-weight="normal"  stroke="#e4e4e4" stroke-width="0.3">5</text>
<line x1="485.12" y1="481.10" x2="485.12" y2="485.90" stroke="#dcdcdc" stroke-width="1.4" />
<text x="485.12" y="500.40" font-size="12.8" text-anchor="middle" fill="#e4e4e4" font-weight="normal"  stroke="#e4e4e4" stroke-width="0.3">10</text>
<line x1="521.68" y1="481.10" x2="521.68" y2="485.90" stroke="#dcdcdc" stroke-width="1.4" />
<text x="521.68" y="500.40" font-size="12.8" text-anchor="middle" fill="#e4e4e4" font-weight="normal"  stroke="#e4e4e4" stroke-width="0.3">15</text>
<line x1="558.24" y1="481.10" x2="558.24" y2="485.90" stroke="#dcdcdc" stroke-width="1.4" />
<text x="558.24" y="500.40" font-size="12.8" text-anchor="middle" fill="#e4e4e4" font-weight="normal"  stroke="#e4e4e4" stroke-width="0.3">20</text>
<line x1="594.80" y1="481.10" x2="594.80" y2="485.90" stroke="#dcdcdc" stroke-width="1.4" />
<text x="594.80" y="500.40" font-size="12.8" text-anchor="middle" fill="#e4e4e4" font-weight="normal"  stroke="#e4e4e4" stroke-width="0.3">25</text>
<line x1="631.36" y1="481.10" x2="631.36" y2="485.90" stroke="#dcdcdc" stroke-width="1.4" />
<text x="631.36" y="500.40" font-size="12.8" text-anchor="middle" fill="#e4e4e4" font-weight="normal"  stroke="#e4e4e4" stroke-width="0.3">30</text>
<line x1="667.92" y1="481.10" x2="667.92" y2="485.90" stroke="#dcdcdc" stroke-width="1.4" />
<text x="667.92" y="500.40" font-size="12.8" text-anchor="middle" fill="#e4e4e4" font-weight="normal"  stroke="#e4e4e4" stroke-width="0.3">35</text>
<line x1="704.48" y1="481.10" x2="704.48" y2="485.90" stroke="#dcdcdc" stroke-width="1.4" />
<text x="704.48" y="500.40" font-size="12.8" text-anchor="middle" fill="#e4e4e4" font-weight="normal"  stroke="#e4e4e4" stroke-width="0.3">40</text>
<line x1="741.04" y1="481.10" x2="741.04" y2="485.90" stroke="#dcdcdc" stroke-width="1.4" />
<text x="741.04" y="500.40" font-size="12.8" text-anchor="middle" fill="#e4e4e4" font-weight="normal"  stroke="#e4e4e4" stroke-width="0.3">45</text>
<line x1="777.60" y1="481.10" x2="777.60" y2="485.90" stroke="#dcdcdc" stroke-width="1.4" />
<text x="777.60" y="500.40" font-size="12.8" text-anchor="middle" fill="#e4e4e4" font-weight="normal"  stroke="#e4e4e4" stroke-width="0.3">50</text>
<line x1="814.16" y1="481.10" x2="814.16" y2="485.90" stroke="#dcdcdc" stroke-width="1.4" />
<text x="814.16" y="500.40" font-size="12.8" text-anchor="middle" fill="#e4e4e4" font-weight="normal"  stroke="#e4e4e4" stroke-width="0.3">55</text>
<line x1="850.72" y1="481.10" x2="850.72" y2="485.90" stroke="#dcdcdc" stroke-width="1.4" />
<text x="850.72" y="500.40" font-size="12.8" text-anchor="middle" fill="#e4e4e4" font-weight="normal"  stroke="#e4e4e4" stroke-width="0.3">60</text>
<line x1="887.28" y1="481.10" x2="887.28" y2="485.90" stroke="#dcdcdc" stroke-width="1.4" />
<text x="887.28" y="500.40" font-size="12.8" text-anchor="middle" fill="#e4e4e4" font-weight="normal"  stroke="#e4e4e4" stroke-width="0.3">65</text>
<line x1="923.84" y1="481.10" x2="923.84" y2="485.90" stroke="#dcdcdc" stroke-width="1.4" />
<text x="923.84" y="500.40" font-size="12.8" text-anchor="middle" fill="#e4e4e4" font-weight="normal"  stroke="#e4e4e4" stroke-width="0.3">70</text>
<line x1="960.40" y1="481.10" x2="960.40" y2="485.90" stroke="#dcdcdc" stroke-width="1.4" />
<text x="960.40" y="500.40" font-size="12.8" text-anchor="middle" fill="#e4e4e4" font-weight="normal"  stroke="#e4e4e4" stroke-width="0.3">75</text>
<line x1="996.96" y1="481.10" x2="996.96" y2="485.90" stroke="#dcdcdc" stroke-width="1.4" />
<text x="996.96" y="500.40" font-size="12.8" text-anchor="middle" fill="#e4e4e4" font-weight="normal"  stroke="#e4e4e4" stroke-width="0.3">80</text>
<line x1="1033.52" y1="481.10" x2="1033.52" y2="485.90" stroke="#dcdcdc" stroke-width="1.4" />
<text x="1033.52" y="500.40" font-size="12.8" text-anchor="middle" fill="#e4e4e4" font-weight="normal"  stroke="#e4e4e4" stroke-width="0.3">85</text>
<line x1="1070.08" y1="481.10" x2="1070.08" y2="485.90" stroke="#dcdcdc" stroke-width="1.4" />
<text x="1070.08" y="500.40" font-size="12.8" text-anchor="middle" fill="#e4e4e4" font-weight="normal"  stroke="#e4e4e4" stroke-width="0.3">90</text>
<line x1="1106.64" y1="481.10" x2="1106.64" y2="485.90" stroke="#dcdcdc" stroke-width="1.4" />
<text x="1106.64" y="500.40" font-size="12.8" text-anchor="middle" fill="#e4e4e4" font-weight="normal"  stroke="#e4e4e4" stroke-width="0.3">95</text>
<line x1="1143.20" y1="481.10" x2="1143.20" y2="485.90" stroke="#dcdcdc" stroke-width="1.4" />
<text x="1143.20" y="500.40" font-size="12.8" text-anchor="middle" fill="#e4e4e4" font-weight="normal"  stroke="#e4e4e4" stroke-width="0.3">100</text>
<text x="613.00" y="289.60" font-size="17.3" text-anchor="start" fill="#ffffff" font-weight="normal" textLength="227.0" lengthAdjust="spacingAndGlyphs"  stroke="#ffffff" stroke-width="0.3">RGB Balance, with Luminance</text>
<polyline points="412.00,390.49 448.56,390.40 485.12,390.26 521.68,389.81 558.24,389.27 594.80,388.46 631.36,387.51 667.92,385.97 704.48,385.52 741.04,383.71 777.60,383.03 814.16,382.72 850.72,383.03 887.28,384.30 923.84,387.60 960.40,389.18 996.96,387.69 1033.52,391.91 1070.08,391.41 1106.64,391.64 1143.20,392.69" fill="none" stroke="#ff0000" stroke-width="2.1" stroke-linejoin="round"/>
<polyline points="412.00,390.22 448.56,390.13 485.12,389.99 521.68,389.54 558.24,389.00 594.80,388.19 631.36,387.24 667.92,385.70 704.48,385.25 741.04,383.44 777.60,382.76 814.16,382.44 850.72,382.63 887.28,381.95 923.84,384.21 960.40,385.43 996.96,382.94 1033.52,388.14 1070.08,387.91 1106.64,388.14 1143.20,389.18" fill="none" stroke="#008a00" stroke-width="2.1" stroke-linejoin="round"/>
<polyline points="412.00,390.40 448.56,390.31 485.12,390.17 521.68,389.72 558.24,389.18 594.80,388.37 631.36,387.42 667.92,385.88 704.48,385.43 741.04,383.62 777.60,382.94 814.16,382.63 850.72,382.94 887.28,383.94 923.84,387.19 960.40,388.91 996.96,385.93 1033.52,390.17 1070.08,389.41 1106.64,389.68 1143.20,390.40" fill="none" stroke="#0000ff" stroke-width="2.1" stroke-linejoin="round"/>
<rect x="1188.00" y="33.90" width="302.40" height="291.90" fill="#242424" />
<line x1="1188.00" y1="296.61" x2="1490.40" y2="296.61" stroke="#a0a0a0" stroke-width="1.2" />
<line x1="1188.00" y1="267.42" x2="1490.40" y2="267.42" stroke="#a0a0a0" stroke-width="1.2" />
<line x1="1188.00" y1="238.23" x2="1490.40" y2="238.23" stroke="#a0a0a0" stroke-width="1.2" />
<line x1="1188.00" y1="209.04" x2="1490.40" y2="209.04" stroke="#a0a0a0" stroke-width="1.2" />
<line x1="1188.00" y1="179.85" x2="1490.40" y2="179.85" stroke="#a0a0a0" stroke-width="1.2" />
<line x1="1188.00" y1="150.66" x2="1490.40" y2="150.66" stroke="#a0a0a0" stroke-width="1.2" />
<line x1="1188.00" y1="121.47" x2="1490.40" y2="121.47" stroke="#a0a0a0" stroke-width="1.2" />
<line x1="1188.00" y1="92.28" x2="1490.40" y2="92.28" stroke="#a0a0a0" stroke-width="1.2" />
<line x1="1188.00" y1="63.09" x2="1490.40" y2="63.09" stroke="#a0a0a0" stroke-width="1.2" />
<rect x="1188.00" y="33.90" width="302.40" height="291.90" fill="none" stroke="#a0a0a0" stroke-width="1.4"/>
<line x1="1182.50" y1="325.80" x2="1188.00" y2="325.80" stroke="#dcdcdc" stroke-width="1.3" />
<text x="1182.80" y="330.40" font-size="12.8" text-anchor="end" fill="#e4e4e4" font-weight="normal"  stroke="#e4e4e4" stroke-width="0.3">0</text>
<line x1="1182.50" y1="296.61" x2="1188.00" y2="296.61" stroke="#dcdcdc" stroke-width="1.3" />
<text x="1182.80" y="301.21" font-size="12.8" text-anchor="end" fill="#e4e4e4" font-weight="normal"  stroke="#e4e4e4" stroke-width="0.3">0,1</text>
<line x1="1182.50" y1="267.42" x2="1188.00" y2="267.42" stroke="#dcdcdc" stroke-width="1.3" />
<text x="1182.80" y="272.02" font-size="12.8" text-anchor="end" fill="#e4e4e4" font-weight="normal"  stroke="#e4e4e4" stroke-width="0.3">0,2</text>
<line x1="1182.50" y1="238.23" x2="1188.00" y2="238.23" stroke="#dcdcdc" stroke-width="1.3" />
<text x="1182.80" y="242.83" font-size="12.8" text-anchor="end" fill="#e4e4e4" font-weight="normal"  stroke="#e4e4e4" stroke-width="0.3">0,3</text>
<line x1="1182.50" y1="209.04" x2="1188.00" y2="209.04" stroke="#dcdcdc" stroke-width="1.3" />
<text x="1182.80" y="213.64" font-size="12.8" text-anchor="end" fill="#e4e4e4" font-weight="normal"  stroke="#e4e4e4" stroke-width="0.3">0,4</text>
<line x1="1182.50" y1="179.85" x2="1188.00" y2="179.85" stroke="#dcdcdc" stroke-width="1.3" />
<text x="1182.80" y="184.45" font-size="12.8" text-anchor="end" fill="#e4e4e4" font-weight="normal"  stroke="#e4e4e4" stroke-width="0.3">0,5</text>
<line x1="1182.50" y1="150.66" x2="1188.00" y2="150.66" stroke="#dcdcdc" stroke-width="1.3" />
<text x="1182.80" y="155.26" font-size="12.8" text-anchor="end" fill="#e4e4e4" font-weight="normal"  stroke="#e4e4e4" stroke-width="0.3">0,6</text>
<line x1="1182.50" y1="121.47" x2="1188.00" y2="121.47" stroke="#dcdcdc" stroke-width="1.3" />
<text x="1182.80" y="126.07" font-size="12.8" text-anchor="end" fill="#e4e4e4" font-weight="normal"  stroke="#e4e4e4" stroke-width="0.3">0,7</text>
<line x1="1182.50" y1="92.28" x2="1188.00" y2="92.28" stroke="#dcdcdc" stroke-width="1.3" />
<text x="1182.80" y="96.88" font-size="12.8" text-anchor="end" fill="#e4e4e4" font-weight="normal"  stroke="#e4e4e4" stroke-width="0.3">0,8</text>
<line x1="1182.50" y1="63.09" x2="1188.00" y2="63.09" stroke="#dcdcdc" stroke-width="1.3" />
<text x="1182.80" y="67.69" font-size="12.8" text-anchor="end" fill="#e4e4e4" font-weight="normal"  stroke="#e4e4e4" stroke-width="0.3">0,9</text>
<line x1="1182.50" y1="33.90" x2="1188.00" y2="33.90" stroke="#dcdcdc" stroke-width="1.3" />
<text x="1182.80" y="38.50" font-size="12.8" text-anchor="end" fill="#e4e4e4" font-weight="normal"  stroke="#e4e4e4" stroke-width="0.3">1</text>
<line x1="1188.00" y1="325.80" x2="1188.00" y2="330.60" stroke="#dcdcdc" stroke-width="1.4" />
<text x="1188.00" y="344.30" font-size="12.8" text-anchor="middle" fill="#e4e4e4" font-weight="normal"  stroke="#e4e4e4" stroke-width="0.3">0</text>
<line x1="1248.48" y1="325.80" x2="1248.48" y2="330.60" stroke="#dcdcdc" stroke-width="1.4" />
<text x="1248.48" y="344.30" font-size="12.8" text-anchor="middle" fill="#e4e4e4" font-weight="normal"  stroke="#e4e4e4" stroke-width="0.3">20</text>
<line x1="1308.96" y1="325.80" x2="1308.96" y2="330.60" stroke="#dcdcdc" stroke-width="1.4" />
<text x="1308.96" y="344.30" font-size="12.8" text-anchor="middle" fill="#e4e4e4" font-weight="normal"  stroke="#e4e4e4" stroke-width="0.3">40</text>
<line x1="1369.44" y1="325.80" x2="1369.44" y2="330.60" stroke="#dcdcdc" stroke-width="1.4" />
<text x="1369.44" y="344.30" font-size="12.8" text-anchor="middle" fill="#e4e4e4" font-weight="normal"  stroke="#e4e4e4" stroke-width="0.3">60</text>
<line x1="1429.92" y1="325.80" x2="1429.92" y2="330.60" stroke="#dcdcdc" stroke-width="1.4" />
<text x="1429.92" y="344.30" font-size="12.8" text-anchor="middle" fill="#e4e4e4" font-weight="normal"  stroke="#e4e4e4" stroke-width="0.3">80</text>
<line x1="1490.40" y1="325.80" x2="1490.40" y2="330.60" stroke="#dcdcdc" stroke-width="1.4" />
<text x="1490.40" y="344.30" font-size="12.8" text-anchor="middle" fill="#e4e4e4" font-weight="normal"  stroke="#e4e4e4" stroke-width="0.3">100</text>
<text x="1328.40" y="28.60" font-size="13.3" text-anchor="middle" fill="#e4e4e4" font-weight="normal" textLength="28.0" lengthAdjust="spacingAndGlyphs"  stroke="#e4e4e4" stroke-width="0.3">EOTF</text>
<polyline points="1188.00,325.80 1216.43,296.61 1245.46,267.42 1276.91,238.23 1306.84,209.04 1335.87,179.85 1367.32,150.66 1398.47,121.47 1428.71,92.28 1444.74,78.27 1490.40,78.27" fill="none" stroke="#f0f000" stroke-width="2.3" stroke-linejoin="round"/>
<polyline points="1188.00,325.80 1214.31,296.61 1242.13,267.42 1272.97,238.23 1303.82,209.04 1333.15,179.85 1365.21,150.66 1396.96,121.47 1427.50,92.28 1440.81,79.73 1444.44,77.39 1490.40,77.39" fill="none" stroke="#989898" stroke-width="2" stroke-linejoin="round"/>
<rect x="1198.80" y="373.20" width="291.60" height="294.10" fill="#242424" />
<line x1="1198.80" y1="607.10" x2="1490.40" y2="607.10" stroke="#a0a0a0" stroke-width="1.3" />
<line x1="1198.80" y1="545.60" x2="1490.40" y2="545.60" stroke="#a0a0a0" stroke-width="1.3" />
<line x1="1198.80" y1="484.70" x2="1490.40" y2="484.70" stroke="#a0a0a0" stroke-width="1.3" />
<line x1="1198.80" y1="422.70" x2="1490.40" y2="422.70" stroke="#a0a0a0" stroke-width="1.3" />
<rect x="1198.80" y="373.20" width="291.60" height="294.10" fill="none" stroke="#a0a0a0" stroke-width="1.4"/>
<line x1="1193.30" y1="667.30" x2="1198.80" y2="667.30" stroke="#dcdcdc" stroke-width="1.3" />
<text x="1193.60" y="671.90" font-size="12.8" text-anchor="end" fill="#e4e4e4" font-weight="normal"  stroke="#e4e4e4" stroke-width="0.3">0</text>
<line x1="1193.30" y1="607.10" x2="1198.80" y2="607.10" stroke="#dcdcdc" stroke-width="1.3" />
<text x="1193.60" y="611.70" font-size="12.8" text-anchor="end" fill="#e4e4e4" font-weight="normal"  stroke="#e4e4e4" stroke-width="0.3">500</text>
<line x1="1193.30" y1="545.60" x2="1198.80" y2="545.60" stroke="#dcdcdc" stroke-width="1.3" />
<text x="1193.60" y="550.20" font-size="12.8" text-anchor="end" fill="#e4e4e4" font-weight="normal"  stroke="#e4e4e4" stroke-width="0.3">1000</text>
<line x1="1193.30" y1="484.70" x2="1198.80" y2="484.70" stroke="#dcdcdc" stroke-width="1.3" />
<text x="1193.60" y="489.30" font-size="12.8" text-anchor="end" fill="#e4e4e4" font-weight="normal"  stroke="#e4e4e4" stroke-width="0.3">1500</text>
<line x1="1193.30" y1="422.70" x2="1198.80" y2="422.70" stroke="#dcdcdc" stroke-width="1.3" />
<text x="1193.60" y="427.30" font-size="12.8" text-anchor="end" fill="#e4e4e4" font-weight="normal"  stroke="#e4e4e4" stroke-width="0.3">2000</text>
<line x1="1198.80" y1="667.30" x2="1198.80" y2="672.10" stroke="#dcdcdc" stroke-width="1.4" />
<text x="1198.80" y="684.90" font-size="12.8" text-anchor="middle" fill="#e4e4e4" font-weight="normal"  stroke="#e4e4e4" stroke-width="0.3">0</text>
<line x1="1257.12" y1="667.30" x2="1257.12" y2="672.10" stroke="#dcdcdc" stroke-width="1.4" />
<text x="1257.12" y="684.90" font-size="12.8" text-anchor="middle" fill="#e4e4e4" font-weight="normal"  stroke="#e4e4e4" stroke-width="0.3">20</text>
<line x1="1315.44" y1="667.30" x2="1315.44" y2="672.10" stroke="#dcdcdc" stroke-width="1.4" />
<text x="1315.44" y="684.90" font-size="12.8" text-anchor="middle" fill="#e4e4e4" font-weight="normal"  stroke="#e4e4e4" stroke-width="0.3">40</text>
<line x1="1373.76" y1="667.30" x2="1373.76" y2="672.10" stroke="#dcdcdc" stroke-width="1.4" />
<text x="1373.76" y="684.90" font-size="12.8" text-anchor="middle" fill="#e4e4e4" font-weight="normal"  stroke="#e4e4e4" stroke-width="0.3">60</text>
<line x1="1432.08" y1="667.30" x2="1432.08" y2="672.10" stroke="#dcdcdc" stroke-width="1.4" />
<text x="1432.08" y="684.90" font-size="12.8" text-anchor="middle" fill="#e4e4e4" font-weight="normal"  stroke="#e4e4e4" stroke-width="0.3">80</text>
<line x1="1490.40" y1="667.30" x2="1490.40" y2="672.10" stroke="#dcdcdc" stroke-width="1.4" />
<text x="1490.40" y="684.90" font-size="12.8" text-anchor="middle" fill="#e4e4e4" font-weight="normal"  stroke="#e4e4e4" stroke-width="0.3">100</text>
<text x="1328.00" y="369.50" font-size="13.3" text-anchor="middle" fill="#e4e4e4" font-weight="normal" textLength="61.0" lengthAdjust="spacingAndGlyphs"  stroke="#e4e4e4" stroke-width="0.3">Luminance</text>
<polyline points="1198.80,667.30 1213.38,667.29 1227.96,667.26 1242.54,667.16 1257.12,666.95 1271.70,666.57 1286.28,665.92 1300.86,664.77 1315.44,662.85 1330.02,659.59 1344.60,654.54 1359.18,648.88 1373.76,636.60 1388.34,616.97 1402.92,589.39 1417.50,545.60 1432.08,475.40 1446.66,379.05 1461.24,378.93 1475.82,378.80 1490.40,378.68" fill="none" stroke="#f0f000" stroke-width="2.4" stroke-linejoin="round"/>
<polyline points="1198.80,667.30 1213.38,667.29 1227.96,667.26 1242.54,667.17 1257.12,666.97 1271.70,666.60 1286.28,665.95 1300.86,664.81 1315.44,662.92 1330.02,659.84 1344.60,654.78 1359.18,647.07 1373.76,634.07 1388.34,614.44 1402.92,587.91 1417.50,538.54 1432.08,467.34 1446.66,376.57 1461.24,377.07 1475.82,377.56 1490.40,378.06" fill="none" stroke="#989898" stroke-width="2" stroke-linejoin="round"/>
<text x="105.30" y="538.30" font-size="17.9" text-anchor="start" fill="#ffffff" font-weight="normal" textLength="128.4" lengthAdjust="spacingAndGlyphs"  stroke="#ffffff" stroke-width="0.3">Current Reading:</text>
<text x="105.30" y="570.90" font-size="22.4" text-anchor="start" fill="#ffffff" font-weight="normal" textLength="86.2" lengthAdjust="spacingAndGlyphs"  stroke="#ffffff" stroke-width="0.3">x: 0,3333</text>
<text x="105.30" y="605.60" font-size="22.4" text-anchor="start" fill="#ffffff" font-weight="normal" textLength="86.5" lengthAdjust="spacingAndGlyphs"  stroke="#ffffff" stroke-width="0.3">y: 0,3333</text>
<text x="105.30" y="640.40" font-size="22.4" text-anchor="start" fill="#ffffff" font-weight="normal" textLength="39.6" lengthAdjust="spacingAndGlyphs"  stroke="#ffffff" stroke-width="0.3">fL: 0</text>
<text x="105.30" y="675.50" font-size="22.4" text-anchor="start" fill="#ffffff" font-weight="normal" textLength="81.5" lengthAdjust="spacingAndGlyphs"  stroke="#ffffff" stroke-width="0.3">cd/m²: 0</text>
<rect x="298.40" y="508.60" width="596.90" height="171.20" fill="#1b1b1b" />
<rect x="301.00" y="510.00" width="593.50" height="23.20" fill="url(#hdr)" />
<text transform="translate(435.00,527.00) scale(0.9,1)" font-size="14.6" text-anchor="middle" fill="#ffffff" font-weight="bold" >0</text>
<text transform="translate(475.00,527.00) scale(0.9,1)" font-size="14.6" text-anchor="middle" fill="#ffffff" font-weight="bold" >5</text>
<text transform="translate(515.00,527.00) scale(0.9,1)" font-size="14.6" text-anchor="middle" fill="#ffffff" font-weight="bold" >10</text>
<text transform="translate(555.00,527.00) scale(0.9,1)" font-size="14.6" text-anchor="middle" fill="#ffffff" font-weight="bold" >15</text>
<text transform="translate(594.75,527.00) scale(0.9,1)" font-size="14.6" text-anchor="middle" fill="#ffffff" font-weight="bold" >20</text>
<text transform="translate(634.25,527.00) scale(0.9,1)" font-size="14.6" text-anchor="middle" fill="#ffffff" font-weight="bold" >25</text>
<text transform="translate(677.50,527.00) scale(0.9,1)" font-size="14.6" text-anchor="middle" fill="#ffffff" font-weight="bold" >30</text>
<text transform="translate(724.50,527.00) scale(0.9,1)" font-size="14.6" text-anchor="middle" fill="#ffffff" font-weight="bold" >35</text>
<text transform="translate(771.50,527.00) scale(0.9,1)" font-size="14.6" text-anchor="middle" fill="#ffffff" font-weight="bold" >40</text>
<text transform="translate(819.00,527.00) scale(0.9,1)" font-size="14.6" text-anchor="middle" fill="#ffffff" font-weight="bold" >45</text>
<text transform="translate(871.00,527.00) scale(0.9,1)" font-size="14.6" text-anchor="middle" fill="#ffffff" font-weight="bold" >50</text>
<clipPath id="tclip"><rect x="301" y="510" width="593.5" height="170"/></clipPath>
<g clip-path="url(#tclip)">
<rect x="301.00" y="533.20" width="593.50" height="22.20" fill="#444444" />
<text transform="translate(312.30,549.60) scale(0.875,1)" font-size="14.8" text-anchor="start" fill="#ffffff" font-weight="bold" >Y</text>
<text transform="translate(419.00,549.60) scale(0.886,1)" font-size="14.8" text-anchor="start" fill="#f2f2f2" font-weight="normal"  stroke="#f2f2f2" stroke-width="0.3">0,000</text>
<text transform="translate(459.00,549.60) scale(0.886,1)" font-size="14.8" text-anchor="start" fill="#f2f2f2" font-weight="normal"  stroke="#f2f2f2" stroke-width="0.3">0,059</text>
<text transform="translate(499.00,549.60) scale(0.886,1)" font-size="14.8" text-anchor="start" fill="#f2f2f2" font-weight="normal"  stroke="#f2f2f2" stroke-width="0.3">0,373</text>
<text transform="translate(539.00,549.60) scale(0.886,1)" font-size="14.8" text-anchor="start" fill="#f2f2f2" font-weight="normal"  stroke="#f2f2f2" stroke-width="0.3">1,224</text>
<text transform="translate(579.00,549.60) scale(0.886,1)" font-size="14.8" text-anchor="start" fill="#f2f2f2" font-weight="normal"  stroke="#f2f2f2" stroke-width="0.3">2,903</text>
<text transform="translate(618.50,549.60) scale(0.886,1)" font-size="14.8" text-anchor="start" fill="#f2f2f2" font-weight="normal"  stroke="#f2f2f2" stroke-width="0.3">6,069</text>
<text transform="translate(658.00,549.60) scale(0.886,1)" font-size="14.8" text-anchor="start" fill="#f2f2f2" font-weight="normal"  stroke="#f2f2f2" stroke-width="0.3">11,479</text>
<text transform="translate(705.00,549.60) scale(0.886,1)" font-size="14.8" text-anchor="start" fill="#f2f2f2" font-weight="normal"  stroke="#f2f2f2" stroke-width="0.3">21,049</text>
<text transform="translate(752.00,549.60) scale(0.886,1)" font-size="14.8" text-anchor="start" fill="#f2f2f2" font-weight="normal"  stroke="#f2f2f2" stroke-width="0.3">36,969</text>
<text transform="translate(799.00,549.60) scale(0.886,1)" font-size="14.8" text-anchor="start" fill="#f2f2f2" font-weight="normal"  stroke="#f2f2f2" stroke-width="0.3">64,189</text>
<text transform="translate(847.00,549.60) scale(0.886,1)" font-size="14.8" text-anchor="start" fill="#f2f2f2" font-weight="normal"  stroke="#f2f2f2" stroke-width="0.3">106,364</text>
<rect x="301.00" y="555.28" width="593.50" height="22.20" fill="url(#rowl)" />
<text transform="translate(312.30,571.68) scale(0.875,1)" font-size="14.8" text-anchor="start" fill="#ffffff" font-weight="bold" >x: CIE31</text>
<text transform="translate(419.00,571.68) scale(0.886,1)" font-size="14.8" text-anchor="start" fill="#e2e2e2" font-weight="normal"  stroke="#e2e2e2" stroke-width="0.3">0,333</text>
<text transform="translate(459.00,571.68) scale(0.886,1)" font-size="14.8" text-anchor="start" fill="#e2e2e2" font-weight="normal"  stroke="#e2e2e2" stroke-width="0.3">0,300</text>
<text transform="translate(499.00,571.68) scale(0.886,1)" font-size="14.8" text-anchor="start" fill="#e2e2e2" font-weight="normal"  stroke="#e2e2e2" stroke-width="0.3">0,313</text>
<text transform="translate(539.00,571.68) scale(0.886,1)" font-size="14.8" text-anchor="start" fill="#e2e2e2" font-weight="normal"  stroke="#e2e2e2" stroke-width="0.3">0,311</text>
<text transform="translate(579.00,571.68) scale(0.886,1)" font-size="14.8" text-anchor="start" fill="#e2e2e2" font-weight="normal"  stroke="#e2e2e2" stroke-width="0.3">0,313</text>
<text transform="translate(618.50,571.68) scale(0.886,1)" font-size="14.8" text-anchor="start" fill="#e2e2e2" font-weight="normal"  stroke="#e2e2e2" stroke-width="0.3">0,312</text>
<text transform="translate(658.00,571.68) scale(0.886,1)" font-size="14.8" text-anchor="start" fill="#e2e2e2" font-weight="normal"  stroke="#e2e2e2" stroke-width="0.3">0,311</text>
<text transform="translate(705.00,571.68) scale(0.886,1)" font-size="14.8" text-anchor="start" fill="#e2e2e2" font-weight="normal"  stroke="#e2e2e2" stroke-width="0.3">0,312</text>
<text transform="translate(752.00,571.68) scale(0.886,1)" font-size="14.8" text-anchor="start" fill="#e2e2e2" font-weight="normal"  stroke="#e2e2e2" stroke-width="0.3">0,312</text>
<text transform="translate(799.00,571.68) scale(0.886,1)" font-size="14.8" text-anchor="start" fill="#e2e2e2" font-weight="normal"  stroke="#e2e2e2" stroke-width="0.3">0,313</text>
<text transform="translate(847.00,571.68) scale(0.886,1)" font-size="14.8" text-anchor="start" fill="#e2e2e2" font-weight="normal"  stroke="#e2e2e2" stroke-width="0.3">0,312</text>
<rect x="301.00" y="577.36" width="593.50" height="22.20" fill="#444444" />
<text transform="translate(312.30,593.76) scale(0.875,1)" font-size="14.8" text-anchor="start" fill="#ffffff" font-weight="bold" >y: CIE31</text>
<text transform="translate(419.00,593.76) scale(0.886,1)" font-size="14.8" text-anchor="start" fill="#f2f2f2" font-weight="normal"  stroke="#f2f2f2" stroke-width="0.3">0,333</text>
<text transform="translate(459.00,593.76) scale(0.886,1)" font-size="14.8" text-anchor="start" fill="#f2f2f2" font-weight="normal"  stroke="#f2f2f2" stroke-width="0.3">0,353</text>
<text transform="translate(499.00,593.76) scale(0.886,1)" font-size="14.8" text-anchor="start" fill="#f2f2f2" font-weight="normal"  stroke="#f2f2f2" stroke-width="0.3">0,334</text>
<text transform="translate(539.00,593.76) scale(0.886,1)" font-size="14.8" text-anchor="start" fill="#f2f2f2" font-weight="normal"  stroke="#f2f2f2" stroke-width="0.3">0,336</text>
<text transform="translate(579.00,593.76) scale(0.886,1)" font-size="14.8" text-anchor="start" fill="#f2f2f2" font-weight="normal"  stroke="#f2f2f2" stroke-width="0.3">0,334</text>
<text transform="translate(618.50,593.76) scale(0.886,1)" font-size="14.8" text-anchor="start" fill="#f2f2f2" font-weight="normal"  stroke="#f2f2f2" stroke-width="0.3">0,333</text>
<text transform="translate(658.00,593.76) scale(0.886,1)" font-size="14.8" text-anchor="start" fill="#f2f2f2" font-weight="normal"  stroke="#f2f2f2" stroke-width="0.3">0,333</text>
<text transform="translate(705.00,593.76) scale(0.886,1)" font-size="14.8" text-anchor="start" fill="#f2f2f2" font-weight="normal"  stroke="#f2f2f2" stroke-width="0.3">0,331</text>
<text transform="translate(752.00,593.76) scale(0.886,1)" font-size="14.8" text-anchor="start" fill="#f2f2f2" font-weight="normal"  stroke="#f2f2f2" stroke-width="0.3">0,332</text>
<text transform="translate(799.00,593.76) scale(0.886,1)" font-size="14.8" text-anchor="start" fill="#f2f2f2" font-weight="normal"  stroke="#f2f2f2" stroke-width="0.3">0,332</text>
<text transform="translate(847.00,593.76) scale(0.886,1)" font-size="14.8" text-anchor="start" fill="#f2f2f2" font-weight="normal"  stroke="#f2f2f2" stroke-width="0.3">0,331</text>
<rect x="301.00" y="599.44" width="593.50" height="22.20" fill="url(#rowl)" />
<text transform="translate(312.30,615.84) scale(0.875,1)" font-size="14.8" text-anchor="start" fill="#ffffff" font-weight="bold" >Target Y</text>
<text transform="translate(419.00,615.84) scale(0.886,1)" font-size="14.8" text-anchor="start" fill="#e2e2e2" font-weight="normal"  stroke="#e2e2e2" stroke-width="0.3">0,000</text>
<text transform="translate(459.00,615.84) scale(0.886,1)" font-size="14.8" text-anchor="start" fill="#e2e2e2" font-weight="normal"  stroke="#e2e2e2" stroke-width="0.3">0,061</text>
<text transform="translate(499.00,615.84) scale(0.886,1)" font-size="14.8" text-anchor="start" fill="#e2e2e2" font-weight="normal"  stroke="#e2e2e2" stroke-width="0.3">0,328</text>
<text transform="translate(539.00,615.84) scale(0.886,1)" font-size="14.8" text-anchor="start" fill="#e2e2e2" font-weight="normal"  stroke="#e2e2e2" stroke-width="0.3">1,015</text>
<text transform="translate(579.00,615.84) scale(0.886,1)" font-size="14.8" text-anchor="start" fill="#e2e2e2" font-weight="normal"  stroke="#e2e2e2" stroke-width="0.3">2,465</text>
<text transform="translate(618.50,615.84) scale(0.886,1)" font-size="14.8" text-anchor="start" fill="#e2e2e2" font-weight="normal"  stroke="#e2e2e2" stroke-width="0.3">5,238</text>
<text transform="translate(658.00,615.84) scale(0.886,1)" font-size="14.8" text-anchor="start" fill="#e2e2e2" font-weight="normal"  stroke="#e2e2e2" stroke-width="0.3">10,214</text>
<text transform="translate(705.00,615.84) scale(0.886,1)" font-size="14.8" text-anchor="start" fill="#e2e2e2" font-weight="normal"  stroke="#e2e2e2" stroke-width="0.3">18,781</text>
<text transform="translate(752.00,615.84) scale(0.886,1)" font-size="14.8" text-anchor="start" fill="#e2e2e2" font-weight="normal"  stroke="#e2e2e2" stroke-width="0.3">33,104</text>
<text transform="translate(799.00,615.84) scale(0.886,1)" font-size="14.8" text-anchor="start" fill="#e2e2e2" font-weight="normal"  stroke="#e2e2e2" stroke-width="0.3">56,554</text>
<text transform="translate(847.00,615.84) scale(0.886,1)" font-size="14.8" text-anchor="start" fill="#e2e2e2" font-weight="normal"  stroke="#e2e2e2" stroke-width="0.3">94,378</text>
<rect x="301.00" y="621.52" width="593.50" height="22.20" fill="#444444" />
<text transform="translate(312.30,637.92) scale(0.875,1)" font-size="14.8" text-anchor="start" fill="#ffffff" font-weight="bold" >Target x:CIE31</text>
<text transform="translate(419.00,637.92) scale(0.886,1)" font-size="14.8" text-anchor="start" fill="#f2f2f2" font-weight="normal"  stroke="#f2f2f2" stroke-width="0.3">0,313</text>
<text transform="translate(459.00,637.92) scale(0.886,1)" font-size="14.8" text-anchor="start" fill="#f2f2f2" font-weight="normal"  stroke="#f2f2f2" stroke-width="0.3">0,313</text>
<text transform="translate(499.00,637.92) scale(0.886,1)" font-size="14.8" text-anchor="start" fill="#f2f2f2" font-weight="normal"  stroke="#f2f2f2" stroke-width="0.3">0,313</text>
<text transform="translate(539.00,637.92) scale(0.886,1)" font-size="14.8" text-anchor="start" fill="#f2f2f2" font-weight="normal"  stroke="#f2f2f2" stroke-width="0.3">0,313</text>
<text transform="translate(579.00,637.92) scale(0.886,1)" font-size="14.8" text-anchor="start" fill="#f2f2f2" font-weight="normal"  stroke="#f2f2f2" stroke-width="0.3">0,313</text>
<text transform="translate(618.50,637.92) scale(0.886,1)" font-size="14.8" text-anchor="start" fill="#f2f2f2" font-weight="normal"  stroke="#f2f2f2" stroke-width="0.3">0,313</text>
<text transform="translate(658.00,637.92) scale(0.886,1)" font-size="14.8" text-anchor="start" fill="#f2f2f2" font-weight="normal"  stroke="#f2f2f2" stroke-width="0.3">0,313</text>
<text transform="translate(705.00,637.92) scale(0.886,1)" font-size="14.8" text-anchor="start" fill="#f2f2f2" font-weight="normal"  stroke="#f2f2f2" stroke-width="0.3">0,313</text>
<text transform="translate(752.00,637.92) scale(0.886,1)" font-size="14.8" text-anchor="start" fill="#f2f2f2" font-weight="normal"  stroke="#f2f2f2" stroke-width="0.3">0,313</text>
<text transform="translate(799.00,637.92) scale(0.886,1)" font-size="14.8" text-anchor="start" fill="#f2f2f2" font-weight="normal"  stroke="#f2f2f2" stroke-width="0.3">0,313</text>
<text transform="translate(847.00,637.92) scale(0.886,1)" font-size="14.8" text-anchor="start" fill="#f2f2f2" font-weight="normal"  stroke="#f2f2f2" stroke-width="0.3">0,313</text>
<rect x="301.00" y="643.60" width="593.50" height="22.20" fill="url(#rowl)" />
<text transform="translate(312.30,660.00) scale(0.875,1)" font-size="14.8" text-anchor="start" fill="#ffffff" font-weight="bold" >Target y:CIE31</text>
<text transform="translate(419.00,660.00) scale(0.886,1)" font-size="14.8" text-anchor="start" fill="#e2e2e2" font-weight="normal"  stroke="#e2e2e2" stroke-width="0.3">0,329</text>
<text transform="translate(459.00,660.00) scale(0.886,1)" font-size="14.8" text-anchor="start" fill="#e2e2e2" font-weight="normal"  stroke="#e2e2e2" stroke-width="0.3">0,329</text>
<text transform="translate(499.00,660.00) scale(0.886,1)" font-size="14.8" text-anchor="start" fill="#e2e2e2" font-weight="normal"  stroke="#e2e2e2" stroke-width="0.3">0,329</text>
<text transform="translate(539.00,660.00) scale(0.886,1)" font-size="14.8" text-anchor="start" fill="#e2e2e2" font-weight="normal"  stroke="#e2e2e2" stroke-width="0.3">0,329</text>
<text transform="translate(579.00,660.00) scale(0.886,1)" font-size="14.8" text-anchor="start" fill="#e2e2e2" font-weight="normal"  stroke="#e2e2e2" stroke-width="0.3">0,329</text>
<text transform="translate(618.50,660.00) scale(0.886,1)" font-size="14.8" text-anchor="start" fill="#e2e2e2" font-weight="normal"  stroke="#e2e2e2" stroke-width="0.3">0,329</text>
<text transform="translate(658.00,660.00) scale(0.886,1)" font-size="14.8" text-anchor="start" fill="#e2e2e2" font-weight="normal"  stroke="#e2e2e2" stroke-width="0.3">0,329</text>
<text transform="translate(705.00,660.00) scale(0.886,1)" font-size="14.8" text-anchor="start" fill="#e2e2e2" font-weight="normal"  stroke="#e2e2e2" stroke-width="0.3">0,329</text>
<text transform="translate(752.00,660.00) scale(0.886,1)" font-size="14.8" text-anchor="start" fill="#e2e2e2" font-weight="normal"  stroke="#e2e2e2" stroke-width="0.3">0,329</text>
<text transform="translate(799.00,660.00) scale(0.886,1)" font-size="14.8" text-anchor="start" fill="#e2e2e2" font-weight="normal"  stroke="#e2e2e2" stroke-width="0.3">0,329</text>
<text transform="translate(847.00,660.00) scale(0.886,1)" font-size="14.8" text-anchor="start" fill="#e2e2e2" font-weight="normal"  stroke="#e2e2e2" stroke-width="0.3">0,329</text>
</g>
<rect x="301.00" y="665.70" width="593.50" height="13.00" fill="#585858" />
<rect x="317.5" y="667.5" width="278.5" height="10" rx="5" fill="#3c3c3c"/>
<rect x="301.80" y="665.70" width="13.20" height="13.00" fill="#8a8a8a" />
<rect x="881.00" y="665.70" width="13.00" height="13.00" fill="#747474" />
<path d="M311.2 668.5 L305.6 672.2 L311.2 675.9000000000001 Z" fill="#262626"/>
<path d="M885.5 668.7 L890.5 672.2 L885.5 675.7 Z" fill="#2a2a2a"/>
<rect x="932.60" y="518.60" width="210.90" height="152.40" fill="#242424" />
<line x1="932.60" y1="655.80" x2="1143.50" y2="655.80" stroke="#a0a0a0" stroke-width="1.2" />
<line x1="927.10" y1="655.80" x2="932.60" y2="655.80" stroke="#dcdcdc" stroke-width="1.3" />
<text x="927.40" y="660.40" font-size="12.8" text-anchor="end" fill="#e4e4e4" font-weight="normal"  stroke="#e4e4e4" stroke-width="0.3">96</text>
<line x1="932.60" y1="625.40" x2="1143.50" y2="625.40" stroke="#a0a0a0" stroke-width="1.2" />
<line x1="927.10" y1="625.40" x2="932.60" y2="625.40" stroke="#dcdcdc" stroke-width="1.3" />
<text x="927.40" y="630.00" font-size="12.8" text-anchor="end" fill="#e4e4e4" font-weight="normal"  stroke="#e4e4e4" stroke-width="0.3">98</text>
<line x1="932.60" y1="595.00" x2="1143.50" y2="595.00" stroke="#a0a0a0" stroke-width="1.2" />
<line x1="927.10" y1="595.00" x2="932.60" y2="595.00" stroke="#dcdcdc" stroke-width="1.3" />
<text x="927.40" y="599.60" font-size="12.8" text-anchor="end" fill="#e4e4e4" font-weight="normal"  stroke="#e4e4e4" stroke-width="0.3">100</text>
<line x1="932.60" y1="564.60" x2="1143.50" y2="564.60" stroke="#a0a0a0" stroke-width="1.2" />
<line x1="927.10" y1="564.60" x2="932.60" y2="564.60" stroke="#dcdcdc" stroke-width="1.3" />
<text x="927.40" y="569.20" font-size="12.8" text-anchor="end" fill="#e4e4e4" font-weight="normal"  stroke="#e4e4e4" stroke-width="0.3">102</text>
<line x1="932.60" y1="534.20" x2="1143.50" y2="534.20" stroke="#a0a0a0" stroke-width="1.2" />
<line x1="927.10" y1="534.20" x2="932.60" y2="534.20" stroke="#dcdcdc" stroke-width="1.3" />
<text x="927.40" y="538.80" font-size="12.8" text-anchor="end" fill="#e4e4e4" font-weight="normal"  stroke="#e4e4e4" stroke-width="0.3">104</text>
<rect x="932.60" y="518.60" width="210.90" height="152.40" fill="none" stroke="#a0a0a0" stroke-width="1.4"/>
<line x1="932.60" y1="671.00" x2="932.60" y2="676.00" stroke="#d8d8d8" stroke-width="1.4" />
<line x1="1143.50" y1="671.00" x2="1143.50" y2="676.00" stroke="#d8d8d8" stroke-width="1.4" />
<rect x="953.2" y="595.8" width="55.4" height="75.2" fill="url(#gr)" stroke="#0a0a0a" stroke-width="1.2"/>
<rect x="1009.8" y="595.8" width="54.6" height="75.2" fill="url(#gg)" stroke="#0a0a0a" stroke-width="1.2"/>
<rect x="1066.2" y="595.8" width="54.6" height="75.2" fill="url(#gb)" stroke="#0a0a0a" stroke-width="1.2"/>
<line x1="932.60" y1="671.00" x2="1143.50" y2="671.00" stroke="#a0a0a0" stroke-width="1.2" />
<text x="1037.70" y="685.00" font-size="12.8" text-anchor="middle" fill="#e4e4e4" font-weight="normal"  stroke="#e4e4e4" stroke-width="0.3">0</text>
<rect x="0.00" y="691.50" width="1600.00" height="67.00" fill="#2f2f2f" />
<rect x="1596.50" y="691.50" width="3.50" height="67.00" fill="#232323" />
<rect x="1.5" y="694" width="57.5" height="62.5" rx="3.5" fill="url(#btnd)"/>
<rect x="6.5" y="699" width="47.5" height="37" rx="3.5" fill="rgb(0,0,0)" stroke="#000000" stroke-opacity="0.22" stroke-width="1"/>
<path d="M9.0 699.6 H51.5" stroke="#000000" stroke-opacity="0.28" stroke-width="1.2" fill="none"/>
<text x="30.20" y="751.60" font-size="10.5" text-anchor="middle" fill="#ffffff" font-weight="bold" >0</text>
<rect x="61.55" y="694" width="57.5" height="62.5" rx="3.5" fill="url(#btn)" stroke="#a4a4a4" stroke-opacity="0.55" stroke-width="1"/>
<rect x="66.55" y="699" width="47.5" height="37" rx="3.5" fill="rgb(13,13,13)" stroke="#000000" stroke-opacity="0.22" stroke-width="1"/>
<path d="M69.05 699.6 H111.55" stroke="#000000" stroke-opacity="0.28" stroke-width="1.2" fill="none"/>
<text x="90.25" y="751.60" font-size="10.5" text-anchor="middle" fill="#222222" font-weight="bold" >5</text>
<rect x="121.6" y="694" width="57.5" height="62.5" rx="3.5" fill="url(#btn)" stroke="#a4a4a4" stroke-opacity="0.55" stroke-width="1"/>
<rect x="126.6" y="699" width="47.5" height="37" rx="3.5" fill="rgb(26,26,26)" stroke="#000000" stroke-opacity="0.22" stroke-width="1"/>
<path d="M129.1 699.6 H171.6" stroke="#000000" stroke-opacity="0.28" stroke-width="1.2" fill="none"/>
<text x="150.30" y="751.60" font-size="10.5" text-anchor="middle" fill="#222222" font-weight="bold" >10</text>
<rect x="181.64999999999998" y="694" width="57.5" height="62.5" rx="3.5" fill="url(#btn)" stroke="#a4a4a4" stroke-opacity="0.55" stroke-width="1"/>
<rect x="186.64999999999998" y="699" width="47.5" height="37" rx="3.5" fill="rgb(38,38,38)" stroke="#000000" stroke-opacity="0.22" stroke-width="1"/>
<path d="M189.14999999999998 699.6 H231.64999999999998" stroke="#000000" stroke-opacity="0.28" stroke-width="1.2" fill="none"/>
<text x="210.35" y="751.60" font-size="10.5" text-anchor="middle" fill="#222222" font-weight="bold" >15</text>
<rect x="241.7" y="694" width="57.5" height="62.5" rx="3.5" fill="url(#btn)" stroke="#a4a4a4" stroke-opacity="0.55" stroke-width="1"/>
<rect x="246.7" y="699" width="47.5" height="37" rx="3.5" fill="rgb(51,51,51)" stroke="#000000" stroke-opacity="0.22" stroke-width="1"/>
<path d="M249.2 699.6 H291.7" stroke="#000000" stroke-opacity="0.28" stroke-width="1.2" fill="none"/>
<text x="270.40" y="751.60" font-size="10.5" text-anchor="middle" fill="#222222" font-weight="bold" >20</text>
<rect x="301.75" y="694" width="57.5" height="62.5" rx="3.5" fill="url(#btn)" stroke="#a4a4a4" stroke-opacity="0.55" stroke-width="1"/>
<rect x="306.75" y="699" width="47.5" height="37" rx="3.5" fill="rgb(64,64,64)" stroke="#000000" stroke-opacity="0.22" stroke-width="1"/>
<path d="M309.25 699.6 H351.75" stroke="#000000" stroke-opacity="0.28" stroke-width="1.2" fill="none"/>
<text x="330.45" y="751.60" font-size="10.5" text-anchor="middle" fill="#222222" font-weight="bold" >25</text>
<rect x="361.79999999999995" y="694" width="57.5" height="62.5" rx="3.5" fill="url(#btn)" stroke="#a4a4a4" stroke-opacity="0.55" stroke-width="1"/>
<rect x="366.79999999999995" y="699" width="47.5" height="37" rx="3.5" fill="rgb(76,76,76)" stroke="#000000" stroke-opacity="0.22" stroke-width="1"/>
<path d="M369.29999999999995 699.6 H411.79999999999995" stroke="#000000" stroke-opacity="0.28" stroke-width="1.2" fill="none"/>
<text x="390.50" y="751.60" font-size="10.5" text-anchor="middle" fill="#222222" font-weight="bold" >30</text>
<rect x="421.84999999999997" y="694" width="57.5" height="62.5" rx="3.5" fill="url(#btn)" stroke="#a4a4a4" stroke-opacity="0.55" stroke-width="1"/>
<rect x="426.84999999999997" y="699" width="47.5" height="37" rx="3.5" fill="rgb(89,89,89)" stroke="#000000" stroke-opacity="0.22" stroke-width="1"/>
<path d="M429.34999999999997 699.6 H471.84999999999997" stroke="#000000" stroke-opacity="0.28" stroke-width="1.2" fill="none"/>
<text x="450.55" y="751.60" font-size="10.5" text-anchor="middle" fill="#222222" font-weight="bold" >35</text>
<rect x="481.9" y="694" width="57.5" height="62.5" rx="3.5" fill="url(#btn)" stroke="#a4a4a4" stroke-opacity="0.55" stroke-width="1"/>
<rect x="486.9" y="699" width="47.5" height="37" rx="3.5" fill="rgb(102,102,102)" stroke="#000000" stroke-opacity="0.22" stroke-width="1"/>
<path d="M489.4 699.6 H531.9" stroke="#000000" stroke-opacity="0.28" stroke-width="1.2" fill="none"/>
<text x="510.60" y="751.60" font-size="10.5" text-anchor="middle" fill="#222222" font-weight="bold" >40</text>
<rect x="541.9499999999999" y="694" width="57.5" height="62.5" rx="3.5" fill="url(#btn)" stroke="#a4a4a4" stroke-opacity="0.55" stroke-width="1"/>
<rect x="546.9499999999999" y="699" width="47.5" height="37" rx="3.5" fill="rgb(115,115,115)" stroke="#000000" stroke-opacity="0.22" stroke-width="1"/>
<path d="M549.4499999999999 699.6 H591.9499999999999" stroke="#000000" stroke-opacity="0.28" stroke-width="1.2" fill="none"/>
<text x="570.65" y="751.60" font-size="10.5" text-anchor="middle" fill="#222222" font-weight="bold" >45</text>
<rect x="602.0" y="694" width="57.5" height="62.5" rx="3.5" fill="url(#btn)" stroke="#a4a4a4" stroke-opacity="0.55" stroke-width="1"/>
<rect x="607.0" y="699" width="47.5" height="37" rx="3.5" fill="rgb(127,127,127)" stroke="#000000" stroke-opacity="0.22" stroke-width="1"/>
<path d="M609.5 699.6 H652.0" stroke="#000000" stroke-opacity="0.28" stroke-width="1.2" fill="none"/>
<text x="630.70" y="751.60" font-size="10.5" text-anchor="middle" fill="#222222" font-weight="bold" >50</text>
<rect x="662.05" y="694" width="57.5" height="62.5" rx="3.5" fill="url(#btn)" stroke="#a4a4a4" stroke-opacity="0.55" stroke-width="1"/>
<rect x="667.05" y="699" width="47.5" height="37" rx="3.5" fill="rgb(140,140,140)" stroke="#000000" stroke-opacity="0.22" stroke-width="1"/>
<path d="M669.55 699.6 H712.05" stroke="#000000" stroke-opacity="0.28" stroke-width="1.2" fill="none"/>
<text x="690.75" y="751.60" font-size="10.5" text-anchor="middle" fill="#222222" font-weight="bold" >55</text>
<rect x="722.0999999999999" y="694" width="57.5" height="62.5" rx="3.5" fill="url(#btn)" stroke="#a4a4a4" stroke-opacity="0.55" stroke-width="1"/>
<rect x="727.0999999999999" y="699" width="47.5" height="37" rx="3.5" fill="rgb(153,153,153)" stroke="#000000" stroke-opacity="0.22" stroke-width="1"/>
<path d="M729.5999999999999 699.6 H772.0999999999999" stroke="#000000" stroke-opacity="0.28" stroke-width="1.2" fill="none"/>
<text x="750.80" y="751.60" font-size="10.5" text-anchor="middle" fill="#222222" font-weight="bold" >60</text>
<rect x="782.15" y="694" width="57.5" height="62.5" rx="3.5" fill="url(#btn)" stroke="#a4a4a4" stroke-opacity="0.55" stroke-width="1"/>
<rect x="787.15" y="699" width="47.5" height="37" rx="3.5" fill="rgb(166,166,166)" stroke="#000000" stroke-opacity="0.22" stroke-width="1"/>
<path d="M789.65 699.6 H832.15" stroke="#000000" stroke-opacity="0.28" stroke-width="1.2" fill="none"/>
<text x="810.85" y="751.60" font-size="10.5" text-anchor="middle" fill="#222222" font-weight="bold" >65</text>
<rect x="842.1999999999999" y="694" width="57.5" height="62.5" rx="3.5" fill="url(#btn)" stroke="#a4a4a4" stroke-opacity="0.55" stroke-width="1"/>
<rect x="847.1999999999999" y="699" width="47.5" height="37" rx="3.5" fill="rgb(178,178,178)" stroke="#000000" stroke-opacity="0.22" stroke-width="1"/>
<path d="M849.6999999999999 699.6 H892.1999999999999" stroke="#000000" stroke-opacity="0.28" stroke-width="1.2" fill="none"/>
<text x="870.90" y="751.60" font-size="10.5" text-anchor="middle" fill="#222222" font-weight="bold" >70</text>
<rect x="902.25" y="694" width="57.5" height="62.5" rx="3.5" fill="url(#btn)" stroke="#a4a4a4" stroke-opacity="0.55" stroke-width="1"/>
<rect x="907.25" y="699" width="47.5" height="37" rx="3.5" fill="rgb(191,191,191)" stroke="#000000" stroke-opacity="0.22" stroke-width="1"/>
<path d="M909.75 699.6 H952.25" stroke="#000000" stroke-opacity="0.28" stroke-width="1.2" fill="none"/>
<text x="930.95" y="751.60" font-size="10.5" text-anchor="middle" fill="#222222" font-weight="bold" >75</text>
<rect x="962.3" y="694" width="57.5" height="62.5" rx="3.5" fill="url(#btn)" stroke="#a4a4a4" stroke-opacity="0.55" stroke-width="1"/>
<rect x="967.3" y="699" width="47.5" height="37" rx="3.5" fill="rgb(204,204,204)" stroke="#000000" stroke-opacity="0.22" stroke-width="1"/>
<path d="M969.8 699.6 H1012.3" stroke="#000000" stroke-opacity="0.28" stroke-width="1.2" fill="none"/>
<text x="991.00" y="751.60" font-size="10.5" text-anchor="middle" fill="#222222" font-weight="bold" >80</text>
<rect x="1022.3499999999999" y="694" width="57.5" height="62.5" rx="3.5" fill="url(#btn)" stroke="#a4a4a4" stroke-opacity="0.55" stroke-width="1"/>
<rect x="1027.35" y="699" width="47.5" height="37" rx="3.5" fill="rgb(217,217,217)" stroke="#000000" stroke-opacity="0.22" stroke-width="1"/>
<path d="M1029.85 699.6 H1072.35" stroke="#000000" stroke-opacity="0.28" stroke-width="1.2" fill="none"/>
<text x="1051.05" y="751.60" font-size="10.5" text-anchor="middle" fill="#222222" font-weight="bold" >85</text>
<rect x="1082.3999999999999" y="694" width="57.5" height="62.5" rx="3.5" fill="url(#btn)" stroke="#a4a4a4" stroke-opacity="0.55" stroke-width="1"/>
<rect x="1087.3999999999999" y="699" width="47.5" height="37" rx="3.5" fill="rgb(229,229,229)" stroke="#000000" stroke-opacity="0.22" stroke-width="1"/>
<path d="M1089.8999999999999 699.6 H1132.3999999999999" stroke="#000000" stroke-opacity="0.28" stroke-width="1.2" fill="none"/>
<text x="1111.10" y="751.60" font-size="10.5" text-anchor="middle" fill="#222222" font-weight="bold" >90</text>
<rect x="1142.45" y="694" width="57.5" height="62.5" rx="3.5" fill="url(#btn)" stroke="#a4a4a4" stroke-opacity="0.55" stroke-width="1"/>
<rect x="1147.45" y="699" width="47.5" height="37" rx="3.5" fill="rgb(242,242,242)" stroke="#000000" stroke-opacity="0.22" stroke-width="1"/>
<path d="M1149.95 699.6 H1192.45" stroke="#000000" stroke-opacity="0.28" stroke-width="1.2" fill="none"/>
<text x="1171.15" y="751.60" font-size="10.5" text-anchor="middle" fill="#222222" font-weight="bold" >95</text>
<rect x="1202.5" y="694" width="57.5" height="62.5" rx="3.5" fill="url(#btn)" stroke="#a4a4a4" stroke-opacity="0.55" stroke-width="1"/>
<rect x="1207.5" y="699" width="47.5" height="37" rx="3.5" fill="rgb(255,255,255)" stroke="#000000" stroke-opacity="0.22" stroke-width="1"/>
<path d="M1210.0 699.6 H1252.5" stroke="#000000" stroke-opacity="0.28" stroke-width="1.2" fill="none"/>
<text x="1231.20" y="751.60" font-size="10.5" text-anchor="middle" fill="#222222" font-weight="bold" >100</text>
<rect x="1264" y="693.8" width="49" height="22" rx="3" fill="url(#pc1)"/>
<rect x="1264" y="712.6" width="49" height="45" rx="1.5" fill="url(#pc2)"/>
<path d="M1264 712.6 H1313" stroke="#4e4e4e" stroke-width="1.1"/>
<circle cx="1288.5" cy="701.9" r="7.7" fill="url(#circ)"/>
<path d="M1284.2 703.8 L1292.8 703.8 L1288.5 699.8 Z" fill="#2a2a2a"/>
<rect x="1273.2" y="719.8" width="30.6" height="30.6" rx="4" fill="#aaaaaa" stroke="#0c0c0c" stroke-width="2.4"/>
<rect x="1274.4" y="735" width="28.2" height="14.2" fill="#888888"/>
<rect x="1282" y="728.2" width="13.6" height="13.8" fill="#000000"/>
<rect x="1313.50" y="693.00" width="286.00" height="65.00" fill="#2a2a2a" />
<rect x="1314.50" y="693.50" width="47.50" height="30.50" fill="url(#btn2)" />
<rect x="1363.00" y="693.50" width="46.00" height="30.50" fill="url(#btn2)" />
<rect x="1410.00" y="693.50" width="46.00" height="30.50" fill="url(#btn2)" />
<rect x="1457.50" y="693.50" width="46.00" height="30.50" fill="url(#btnl)" />
<rect x="1503.50" y="693.50" width="47.00" height="30.50" fill="url(#btnd)" />
<rect x="1550.50" y="693.50" width="48.00" height="30.50" fill="url(#btn2)" />
<rect x="1314.50" y="726.00" width="141.50" height="31.00" fill="url(#btn2)" />
<rect x="1457.50" y="726.00" width="141.00" height="31.00" fill="url(#btn2)" />
<circle cx="1338.3" cy="709.3" r="10.6" fill="url(#circ)"/>
<path d="M1328.7 713 A10.4 10.4 0 0 0 1347.8999999999999 713" fill="none" stroke="#b4b4b4" stroke-opacity="0.55" stroke-width="1"/>
<circle cx="1386" cy="709.3" r="10.6" fill="url(#circ)"/>
<path d="M1376.4 713 A10.4 10.4 0 0 0 1395.6 713" fill="none" stroke="#b4b4b4" stroke-opacity="0.55" stroke-width="1"/>
<circle cx="1433.5" cy="709.3" r="10.6" fill="url(#circ)"/>
<path d="M1423.9 713 A10.4 10.4 0 0 0 1443.1 713" fill="none" stroke="#b4b4b4" stroke-opacity="0.55" stroke-width="1"/>
<circle cx="1480.3" cy="709.3" r="10.6" fill="url(#circl)"/>
<path d="M1470.7 713 A10.4 10.4 0 0 0 1489.8999999999999 713" fill="none" stroke="#b4b4b4" stroke-opacity="0.55" stroke-width="1"/>
<circle cx="1527.5" cy="709.3" r="10.6" fill="url(#circd)"/>
<circle cx="1574" cy="709.3" r="10.6" fill="url(#circ)"/>
<path d="M1564.4 713 A10.4 10.4 0 0 0 1583.6 713" fill="none" stroke="#b4b4b4" stroke-opacity="0.55" stroke-width="1"/>
<rect x="1334.40" y="705.00" width="8.20" height="8.00" fill="#343434" />
<path d="M1383.2 703.8 L1391.8 709.4 L1383.2 715 Z" fill="#2e2e2e"/>
<path d="M1430.8 704.2 H1428.3 V714.8 H1430.8 M1436.6 704.2 H1439.1 V714.8 H1436.6" fill="none" stroke="#2e2e2e" stroke-width="2"/>
<path d="M1431.2 709.3 H1436.2" stroke="#484848" stroke-width="1.8" stroke-dasharray="2 1"/>
<path d="M1480.3 709 C1478.3 705.6 1473.6 705.6 1473.6 709 C1473.6 712.4 1478.3 712.4 1480.3 709 C1482.3 705.6 1487 705.6 1487 709 C1487 712.4 1482.3 712.4 1480.3 709 Z" fill="none" stroke="#3a3a3a" stroke-width="1.9"/>
<path d="M1522.6 708.2 A5.2 5.2 0 0 1 1531.6 705.8 M1532.4 710.6 A5.2 5.2 0 0 1 1523.4 713" fill="none" stroke="#151515" stroke-width="2.5"/>
<path d="M1529.6 707.6 L1533.8 707.9 L1533.4 703.6 Z M1525.4 711.2 L1521.2 710.9 L1521.6 715.2 Z" fill="#151515"/>
<circle cx="1346.5" cy="741" r="10.5" fill="url(#circ)"/>
<path d="M1346.3 736 L1342 741 L1346.3 746 M1351 736 L1346.7 741 L1351 746" fill="none" stroke="#333333" stroke-width="1.5"/>
<circle cx="1569" cy="741" r="10.5" fill="url(#circ)"/>
<path d="M1564.7 736 L1569 741 L1564.7 746 M1569.4 736 L1573.7 741 L1569.4 746" fill="none" stroke="#333333" stroke-width="1.5"/>
<text x="1375.00" y="749.00" font-size="22.5" text-anchor="start" fill="#2e2e2e" font-weight="normal" textLength="52.0" lengthAdjust="spacingAndGlyphs" stroke="#2e2e2e" stroke-width="0.5">Back</text>
<text x="1486.00" y="749.00" font-size="22.5" text-anchor="start" fill="#2e2e2e" font-weight="normal" textLength="53.5" lengthAdjust="spacingAndGlyphs" stroke="#2e2e2e" stroke-width="0.5">Next</text>
</svg>
</body></html>
